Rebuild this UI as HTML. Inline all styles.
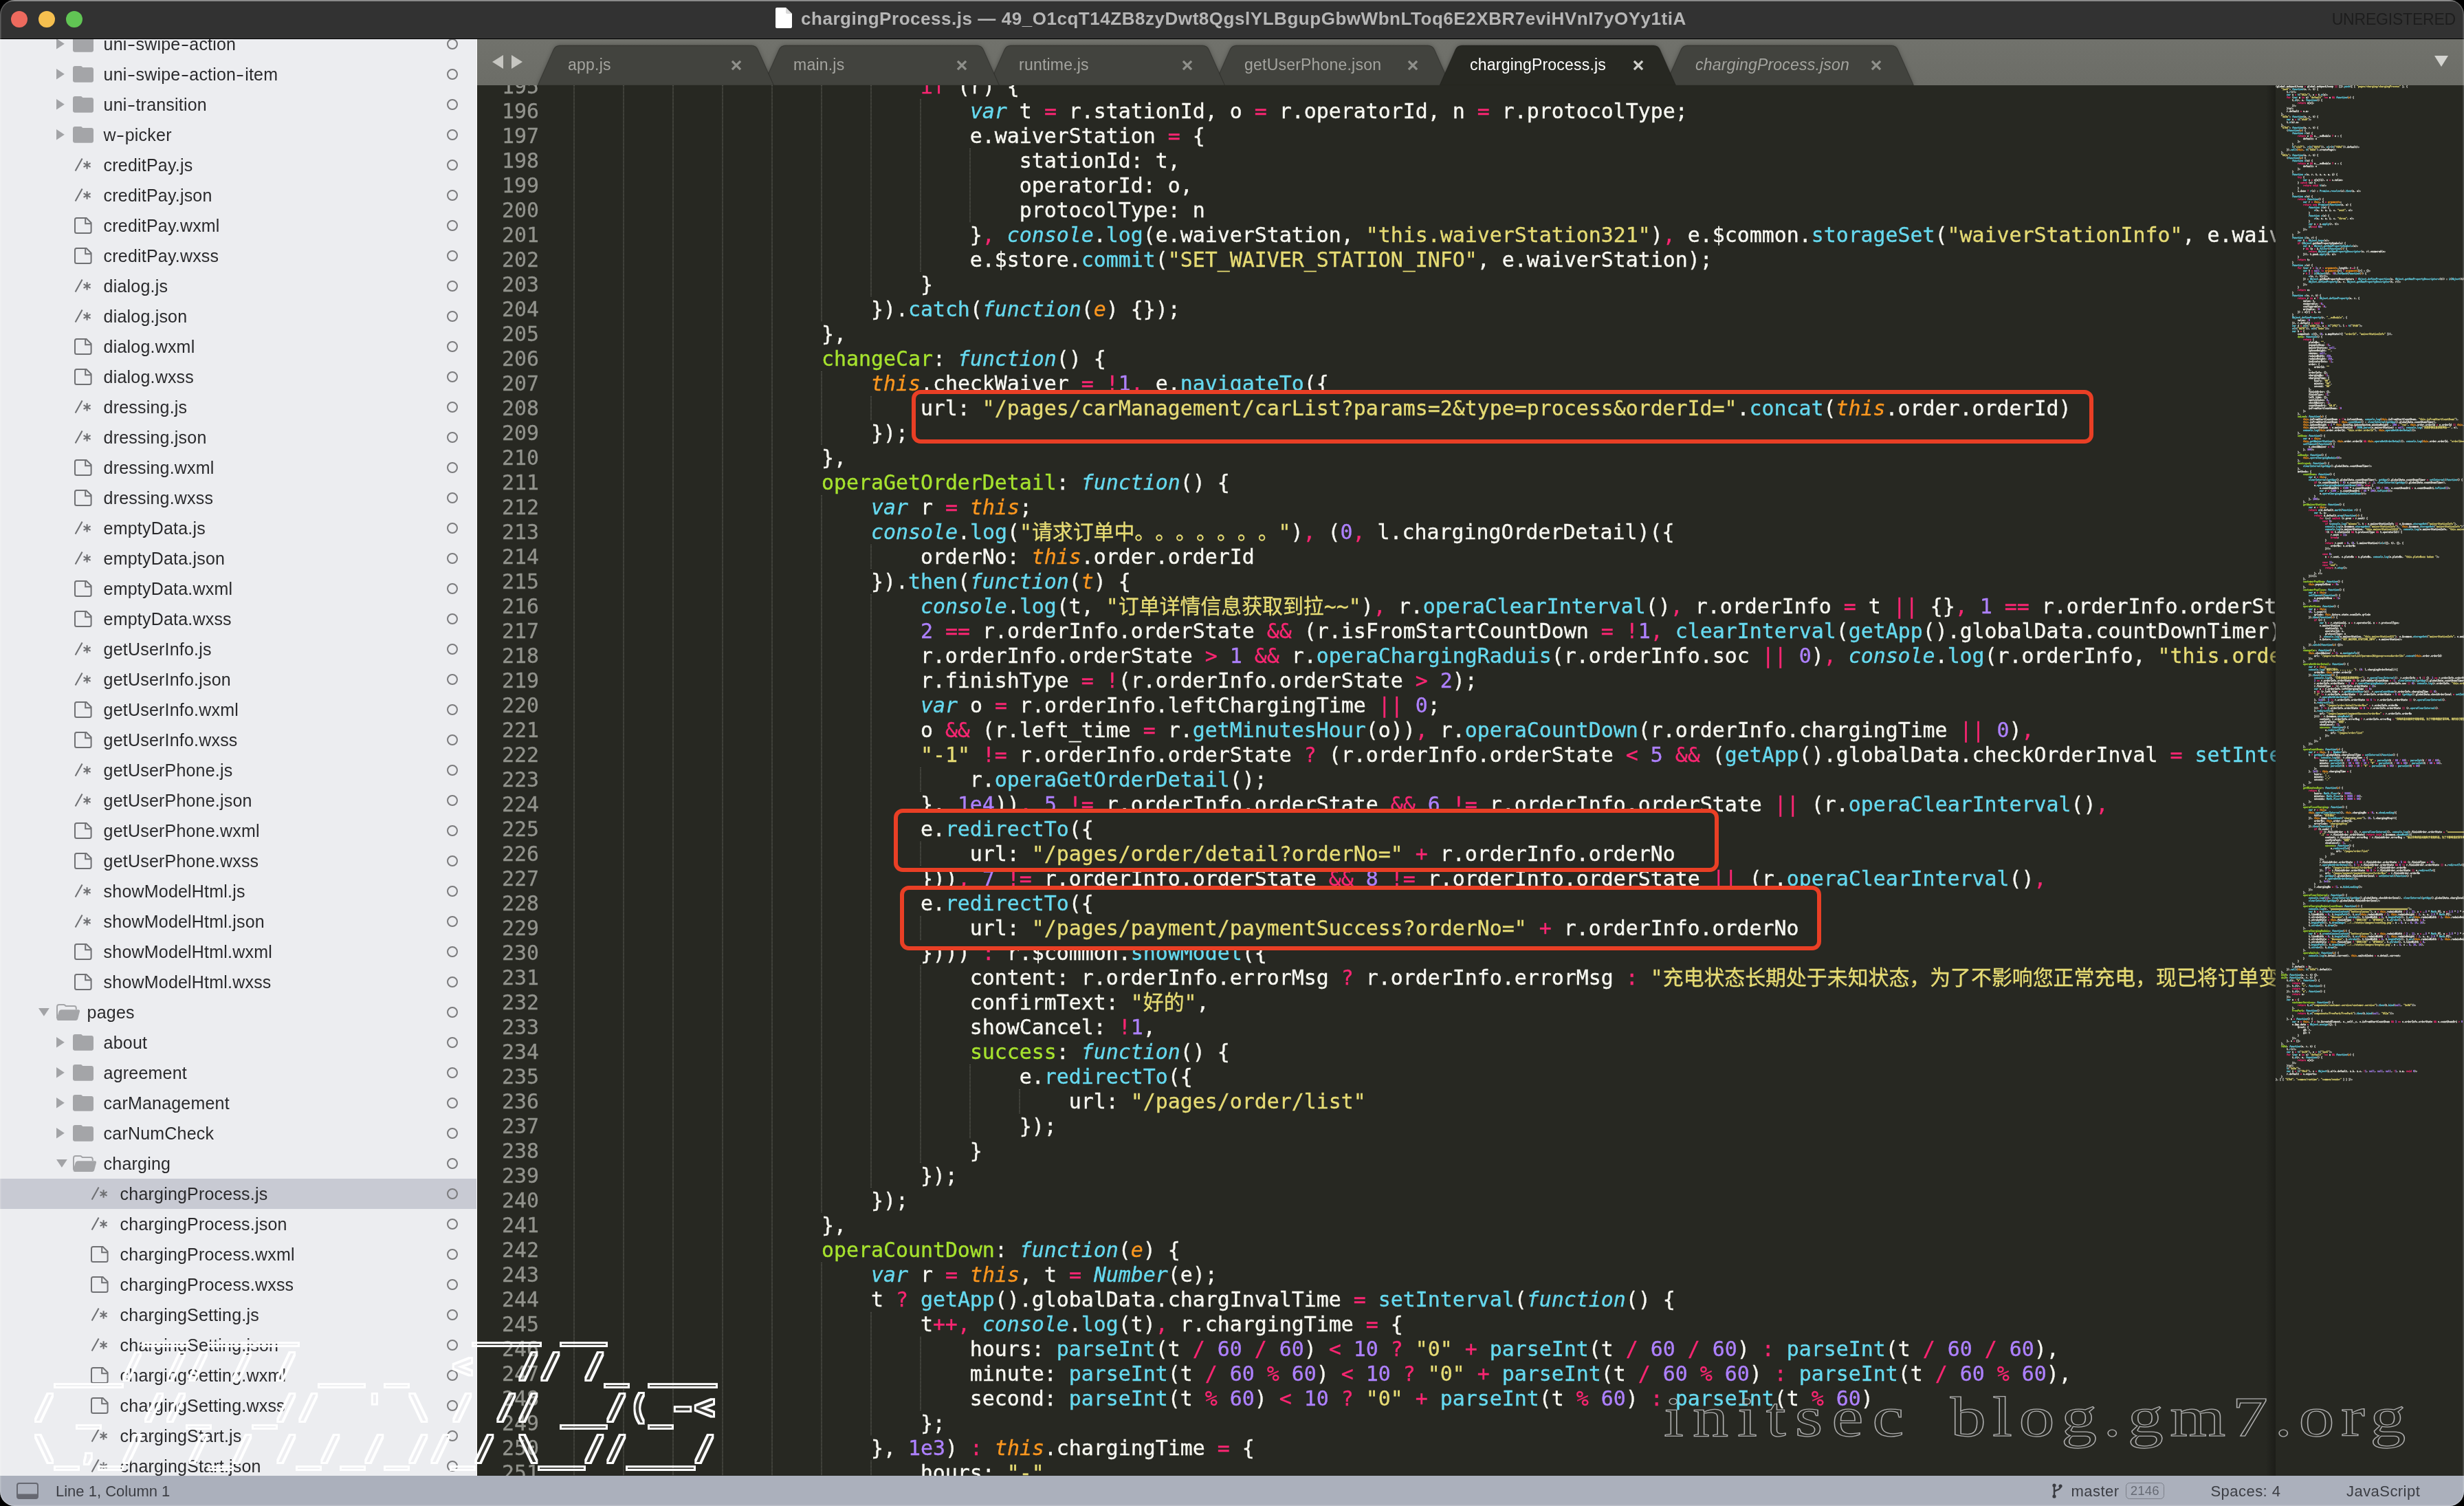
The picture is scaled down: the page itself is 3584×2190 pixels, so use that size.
<!DOCTYPE html>
<html lang="zh"><head><meta charset="utf-8"><title>chargingProcess.js</title>
<style>
*{box-sizing:border-box;margin:0;padding:0}
html,body{width:3584px;height:2190px;background:#000;overflow:hidden}
body{font-family:"Liberation Sans","Noto Sans CJK SC",sans-serif;position:relative}
.win{position:absolute;left:0;top:0;width:3584px;height:2190px;border-radius:21px;overflow:hidden;background:#272822;will-change:transform}
.ic{position:absolute;display:block}
.win:after{content:"";position:absolute;left:0;top:0;width:100%;height:100%;border-radius:21px;box-shadow:inset 0 0 0 1.6px rgba(255,255,255,.2);pointer-events:none;z-index:30}
.title{position:absolute;left:0;top:0;width:100%;height:57px;background:#323232;border-top:2px solid #747474;border-bottom:1px solid #000}
.title .dot{position:absolute;top:14px;width:24px;height:24px;border-radius:50%}
.title .t{position:absolute;left:1165px;top:6.5px;font-weight:bold;font-size:26px;line-height:36px;color:#b6b6b6;white-space:nowrap;letter-spacing:.54px}
.title .u{position:absolute;right:12px;top:7.6px;font-size:23px;line-height:36px;color:#1d1d1d;letter-spacing:-.2px}
.side{position:absolute;left:0;top:57px;width:694px;height:2089px;background:#ecedf0;overflow:hidden;border-right:1px solid #fbfbfb}
.row{position:absolute;left:0;width:693px;height:44px}
.row.sel{background:#c8cad3}
.row .nm{position:absolute;top:0;line-height:44px;font-size:25px;color:#2a2a2c;white-space:nowrap;letter-spacing:.2px}
.row .nm b{font-weight:normal;display:inline-block;transform:scaleX(1.45);margin:0 2.2px}
.row .circ{position:absolute;left:650px;top:14px;width:16px;height:16px;border:2px solid #7b7b7d;border-radius:50%}
.tabbar{position:absolute;left:694px;top:57px;width:2890px;height:67px;background:linear-gradient(#71726c,#6c6d67);overflow:hidden}
.tl{position:absolute;top:14.7px;font-size:23px;line-height:44px;white-space:nowrap;letter-spacing:.2px}
.ed{position:absolute;left:694px;top:124px;width:2616px;height:2022px;background:#272822;overflow:hidden;font-family:"DejaVu Sans Mono","Liberation Mono","Noto Sans CJK SC",monospace;font-size:29.9px;text-spacing-trim:space-all}
.ln{position:absolute;left:0;width:100%;height:36px;line-height:36px;white-space:pre;z-index:1}
.ln.z{z-index:3}
.no{position:absolute;left:36px;width:54px;text-align:right;color:#92938d;-webkit-text-stroke:.3px}
.tx{position:absolute;left:141px;color:#f8f8f2;-webkit-text-stroke:.35px}
.gd{position:absolute;top:0;width:2px;height:36px;background:repeating-linear-gradient(#53544d 0,#53544d 1px,transparent 1px,transparent 2px)}
i{font-style:oblique}
.b{color:#66d9ef}.o{color:#fd971f}.p{color:#f92672}.y{color:#e6db74}.v{color:#ae81ff}.g{color:#a6e22e}
.rb{position:absolute;border:6.4px solid #e93f25;border-radius:13px;background:#272822;z-index:2}
.mm{position:absolute;left:3310px;top:124px;width:274px;height:2022px;background:#272822;overflow:hidden}
.mm pre{position:absolute;left:0;top:0;width:2466px;overflow:hidden;transform:scale(.111111);transform-origin:0 0;font-family:"DejaVu Sans Mono","Liberation Mono","Noto Sans CJK SC",monospace;font-size:29.9px;line-height:36px;color:#f8f8f2;-webkit-text-stroke:2.5px;text-spacing-trim:space-all;opacity:.9}
.mmsh{position:absolute;left:3296px;top:124px;width:14px;height:2022px;background:linear-gradient(90deg,rgba(20,20,17,0),rgba(20,20,17,.55));z-index:5}
.status{position:absolute;left:0;top:2146px;width:100%;height:44px;background:#abb0bc;font-size:22px;color:#3b3d43;line-height:44px}
.status span{position:absolute;top:1.4px;white-space:nowrap;letter-spacing:.45px}
.art{position:absolute;left:50.6px;top:1896px;font-family:"DejaVu Sans Mono","Liberation Mono",monospace;font-size:47px;line-height:60px;letter-spacing:3.704px;color:#fff;white-space:pre;filter:url(#ol);z-index:9}
.art u{display:inline-block;text-decoration:none;letter-spacing:0;transform:scaleX(1.1309);transform-origin:0 50%;margin-left:-1.85px;margin-right:1.85px;position:relative;top:3px}
.art s{display:inline-block;text-decoration:none;letter-spacing:0;width:28.3px;margin-right:3.704px;transform:scaleX(1.7)}
.wm{position:absolute;left:2420px;top:2015.7px;font-family:"Liberation Serif",serif;font-size:82px;line-height:90px;color:transparent;-webkit-text-stroke:1.25px #adadad;white-space:pre;z-index:9;letter-spacing:7.4px;word-spacing:14.7px;transform:scaleX(1.27);transform-origin:0 0}
</style></head><body>
<div class="win">
<div class="title">
<i class="dot" style="left:16px;background:#ed6a5e"></i><i class="dot" style="left:56px;background:#f5bf4f"></i><i class="dot" style="left:96px;background:#61c554"></i>
<svg class="ic" style="left:1128px;top:9px" width="24" height="30" viewBox="0 0 24 30"><path d="M2 0H15L24 9V28C24 29.1 23.1 30 22 30H2C.9 30 0 29.1 0 28V2C0 .9 .9 0 2 0Z" fill="#fff"/><path d="M15 0V7C15 8.1 15.9 9 17 9H24Z" fill="#d8d8d8"/></svg>
<span class="t">chargingProcess.js — 49_O1cqT14ZB8zyDwt8QgslYLBgupGbwWbnLToq6E2XBR7eviHVnI7yOYy1tiA</span>
<span class="u">UNREGISTERED</span>
</div>
<div class="side">
<div class="row" style="top:-15.0px"><svg class="ic" style="left:82px;top:14.3px" width="12" height="16" viewBox="0 0 12 16"><path d="M0 0L11.8 7.8L0 15.6Z" fill="#a2a3a6"/></svg><svg class="ic" style="left:106px;top:10px" width="30" height="24" viewBox="0 0 30 24"><path d="M3 0H11.2C12.2 0 12.7 .4 13.3 1L14.3 2H27C28.7 2 30 3.3 30 5V20.8C30 22.5 28.7 23.8 27 23.8H3C1.3 23.8 0 22.5 0 20.8V3C0 1.3 1.3 0 3 0Z" fill="#a4a5a8"/></svg><span class="nm" style="left:150.6px">uni<b>-</b>swipe<b>-</b>action</span><i class="circ"></i></div>
<div class="row" style="top:29.0px"><svg class="ic" style="left:82px;top:14.3px" width="12" height="16" viewBox="0 0 12 16"><path d="M0 0L11.8 7.8L0 15.6Z" fill="#a2a3a6"/></svg><svg class="ic" style="left:106px;top:10px" width="30" height="24" viewBox="0 0 30 24"><path d="M3 0H11.2C12.2 0 12.7 .4 13.3 1L14.3 2H27C28.7 2 30 3.3 30 5V20.8C30 22.5 28.7 23.8 27 23.8H3C1.3 23.8 0 22.5 0 20.8V3C0 1.3 1.3 0 3 0Z" fill="#a4a5a8"/></svg><span class="nm" style="left:150.6px">uni<b>-</b>swipe<b>-</b>action<b>-</b>item</span><i class="circ"></i></div>
<div class="row" style="top:73.0px"><svg class="ic" style="left:82px;top:14.3px" width="12" height="16" viewBox="0 0 12 16"><path d="M0 0L11.8 7.8L0 15.6Z" fill="#a2a3a6"/></svg><svg class="ic" style="left:106px;top:10px" width="30" height="24" viewBox="0 0 30 24"><path d="M3 0H11.2C12.2 0 12.7 .4 13.3 1L14.3 2H27C28.7 2 30 3.3 30 5V20.8C30 22.5 28.7 23.8 27 23.8H3C1.3 23.8 0 22.5 0 20.8V3C0 1.3 1.3 0 3 0Z" fill="#a4a5a8"/></svg><span class="nm" style="left:150.6px">uni<b>-</b>transition</span><i class="circ"></i></div>
<div class="row" style="top:117.0px"><svg class="ic" style="left:82px;top:14.3px" width="12" height="16" viewBox="0 0 12 16"><path d="M0 0L11.8 7.8L0 15.6Z" fill="#a2a3a6"/></svg><svg class="ic" style="left:106px;top:10px" width="30" height="24" viewBox="0 0 30 24"><path d="M3 0H11.2C12.2 0 12.7 .4 13.3 1L14.3 2H27C28.7 2 30 3.3 30 5V20.8C30 22.5 28.7 23.8 27 23.8H3C1.3 23.8 0 22.5 0 20.8V3C0 1.3 1.3 0 3 0Z" fill="#a4a5a8"/></svg><span class="nm" style="left:150.6px">w<b>-</b>picker</span><i class="circ"></i></div>
<div class="row" style="top:161.0px"><svg class="ic" style="left:108px;top:10px" width="26" height="24" viewBox="0 0 26 24"><path d="M1.6 20.4L11.6 2.6" stroke="#707174" stroke-width="2.1" fill="none"/><path d="M18.6 6.2V17.8M13.6 9.1L23.6 14.9M13.6 14.9L23.6 9.1" stroke="#707174" stroke-width="2.1" fill="none"/></svg><span class="nm" style="left:150.6px">creditPay.js</span><i class="circ"></i></div>
<div class="row" style="top:205.0px"><svg class="ic" style="left:108px;top:10px" width="26" height="24" viewBox="0 0 26 24"><path d="M1.6 20.4L11.6 2.6" stroke="#707174" stroke-width="2.1" fill="none"/><path d="M18.6 6.2V17.8M13.6 9.1L23.6 14.9M13.6 14.9L23.6 9.1" stroke="#707174" stroke-width="2.1" fill="none"/></svg><span class="nm" style="left:150.6px">creditPay.json</span><i class="circ"></i></div>
<div class="row" style="top:249.0px"><svg class="ic" style="left:108px;top:10px" width="26" height="24" viewBox="0 0 26 24"><path d="M3.5 1H17.6L24.6 8V20.5C24.6 21.9 23.5 23 22.1 23H3.5C2.1 23 1 21.9 1 20.5V3.5C1 2.1 2.1 1 3.5 1Z" fill="none" stroke="#707174" stroke-width="2"/><path d="M16.2 1V9.3H24.6" fill="none" stroke="#707174" stroke-width="2"/></svg><span class="nm" style="left:150.6px">creditPay.wxml</span><i class="circ"></i></div>
<div class="row" style="top:293.0px"><svg class="ic" style="left:108px;top:10px" width="26" height="24" viewBox="0 0 26 24"><path d="M3.5 1H17.6L24.6 8V20.5C24.6 21.9 23.5 23 22.1 23H3.5C2.1 23 1 21.9 1 20.5V3.5C1 2.1 2.1 1 3.5 1Z" fill="none" stroke="#707174" stroke-width="2"/><path d="M16.2 1V9.3H24.6" fill="none" stroke="#707174" stroke-width="2"/></svg><span class="nm" style="left:150.6px">creditPay.wxss</span><i class="circ"></i></div>
<div class="row" style="top:337.0px"><svg class="ic" style="left:108px;top:10px" width="26" height="24" viewBox="0 0 26 24"><path d="M1.6 20.4L11.6 2.6" stroke="#707174" stroke-width="2.1" fill="none"/><path d="M18.6 6.2V17.8M13.6 9.1L23.6 14.9M13.6 14.9L23.6 9.1" stroke="#707174" stroke-width="2.1" fill="none"/></svg><span class="nm" style="left:150.6px">dialog.js</span><i class="circ"></i></div>
<div class="row" style="top:381.0px"><svg class="ic" style="left:108px;top:10px" width="26" height="24" viewBox="0 0 26 24"><path d="M1.6 20.4L11.6 2.6" stroke="#707174" stroke-width="2.1" fill="none"/><path d="M18.6 6.2V17.8M13.6 9.1L23.6 14.9M13.6 14.9L23.6 9.1" stroke="#707174" stroke-width="2.1" fill="none"/></svg><span class="nm" style="left:150.6px">dialog.json</span><i class="circ"></i></div>
<div class="row" style="top:425.0px"><svg class="ic" style="left:108px;top:10px" width="26" height="24" viewBox="0 0 26 24"><path d="M3.5 1H17.6L24.6 8V20.5C24.6 21.9 23.5 23 22.1 23H3.5C2.1 23 1 21.9 1 20.5V3.5C1 2.1 2.1 1 3.5 1Z" fill="none" stroke="#707174" stroke-width="2"/><path d="M16.2 1V9.3H24.6" fill="none" stroke="#707174" stroke-width="2"/></svg><span class="nm" style="left:150.6px">dialog.wxml</span><i class="circ"></i></div>
<div class="row" style="top:469.0px"><svg class="ic" style="left:108px;top:10px" width="26" height="24" viewBox="0 0 26 24"><path d="M3.5 1H17.6L24.6 8V20.5C24.6 21.9 23.5 23 22.1 23H3.5C2.1 23 1 21.9 1 20.5V3.5C1 2.1 2.1 1 3.5 1Z" fill="none" stroke="#707174" stroke-width="2"/><path d="M16.2 1V9.3H24.6" fill="none" stroke="#707174" stroke-width="2"/></svg><span class="nm" style="left:150.6px">dialog.wxss</span><i class="circ"></i></div>
<div class="row" style="top:513.0px"><svg class="ic" style="left:108px;top:10px" width="26" height="24" viewBox="0 0 26 24"><path d="M1.6 20.4L11.6 2.6" stroke="#707174" stroke-width="2.1" fill="none"/><path d="M18.6 6.2V17.8M13.6 9.1L23.6 14.9M13.6 14.9L23.6 9.1" stroke="#707174" stroke-width="2.1" fill="none"/></svg><span class="nm" style="left:150.6px">dressing.js</span><i class="circ"></i></div>
<div class="row" style="top:557.0px"><svg class="ic" style="left:108px;top:10px" width="26" height="24" viewBox="0 0 26 24"><path d="M1.6 20.4L11.6 2.6" stroke="#707174" stroke-width="2.1" fill="none"/><path d="M18.6 6.2V17.8M13.6 9.1L23.6 14.9M13.6 14.9L23.6 9.1" stroke="#707174" stroke-width="2.1" fill="none"/></svg><span class="nm" style="left:150.6px">dressing.json</span><i class="circ"></i></div>
<div class="row" style="top:601.0px"><svg class="ic" style="left:108px;top:10px" width="26" height="24" viewBox="0 0 26 24"><path d="M3.5 1H17.6L24.6 8V20.5C24.6 21.9 23.5 23 22.1 23H3.5C2.1 23 1 21.9 1 20.5V3.5C1 2.1 2.1 1 3.5 1Z" fill="none" stroke="#707174" stroke-width="2"/><path d="M16.2 1V9.3H24.6" fill="none" stroke="#707174" stroke-width="2"/></svg><span class="nm" style="left:150.6px">dressing.wxml</span><i class="circ"></i></div>
<div class="row" style="top:645.0px"><svg class="ic" style="left:108px;top:10px" width="26" height="24" viewBox="0 0 26 24"><path d="M3.5 1H17.6L24.6 8V20.5C24.6 21.9 23.5 23 22.1 23H3.5C2.1 23 1 21.9 1 20.5V3.5C1 2.1 2.1 1 3.5 1Z" fill="none" stroke="#707174" stroke-width="2"/><path d="M16.2 1V9.3H24.6" fill="none" stroke="#707174" stroke-width="2"/></svg><span class="nm" style="left:150.6px">dressing.wxss</span><i class="circ"></i></div>
<div class="row" style="top:689.0px"><svg class="ic" style="left:108px;top:10px" width="26" height="24" viewBox="0 0 26 24"><path d="M1.6 20.4L11.6 2.6" stroke="#707174" stroke-width="2.1" fill="none"/><path d="M18.6 6.2V17.8M13.6 9.1L23.6 14.9M13.6 14.9L23.6 9.1" stroke="#707174" stroke-width="2.1" fill="none"/></svg><span class="nm" style="left:150.6px">emptyData.js</span><i class="circ"></i></div>
<div class="row" style="top:733.0px"><svg class="ic" style="left:108px;top:10px" width="26" height="24" viewBox="0 0 26 24"><path d="M1.6 20.4L11.6 2.6" stroke="#707174" stroke-width="2.1" fill="none"/><path d="M18.6 6.2V17.8M13.6 9.1L23.6 14.9M13.6 14.9L23.6 9.1" stroke="#707174" stroke-width="2.1" fill="none"/></svg><span class="nm" style="left:150.6px">emptyData.json</span><i class="circ"></i></div>
<div class="row" style="top:777.0px"><svg class="ic" style="left:108px;top:10px" width="26" height="24" viewBox="0 0 26 24"><path d="M3.5 1H17.6L24.6 8V20.5C24.6 21.9 23.5 23 22.1 23H3.5C2.1 23 1 21.9 1 20.5V3.5C1 2.1 2.1 1 3.5 1Z" fill="none" stroke="#707174" stroke-width="2"/><path d="M16.2 1V9.3H24.6" fill="none" stroke="#707174" stroke-width="2"/></svg><span class="nm" style="left:150.6px">emptyData.wxml</span><i class="circ"></i></div>
<div class="row" style="top:821.0px"><svg class="ic" style="left:108px;top:10px" width="26" height="24" viewBox="0 0 26 24"><path d="M3.5 1H17.6L24.6 8V20.5C24.6 21.9 23.5 23 22.1 23H3.5C2.1 23 1 21.9 1 20.5V3.5C1 2.1 2.1 1 3.5 1Z" fill="none" stroke="#707174" stroke-width="2"/><path d="M16.2 1V9.3H24.6" fill="none" stroke="#707174" stroke-width="2"/></svg><span class="nm" style="left:150.6px">emptyData.wxss</span><i class="circ"></i></div>
<div class="row" style="top:865.0px"><svg class="ic" style="left:108px;top:10px" width="26" height="24" viewBox="0 0 26 24"><path d="M1.6 20.4L11.6 2.6" stroke="#707174" stroke-width="2.1" fill="none"/><path d="M18.6 6.2V17.8M13.6 9.1L23.6 14.9M13.6 14.9L23.6 9.1" stroke="#707174" stroke-width="2.1" fill="none"/></svg><span class="nm" style="left:150.6px">getUserInfo.js</span><i class="circ"></i></div>
<div class="row" style="top:909.0px"><svg class="ic" style="left:108px;top:10px" width="26" height="24" viewBox="0 0 26 24"><path d="M1.6 20.4L11.6 2.6" stroke="#707174" stroke-width="2.1" fill="none"/><path d="M18.6 6.2V17.8M13.6 9.1L23.6 14.9M13.6 14.9L23.6 9.1" stroke="#707174" stroke-width="2.1" fill="none"/></svg><span class="nm" style="left:150.6px">getUserInfo.json</span><i class="circ"></i></div>
<div class="row" style="top:953.0px"><svg class="ic" style="left:108px;top:10px" width="26" height="24" viewBox="0 0 26 24"><path d="M3.5 1H17.6L24.6 8V20.5C24.6 21.9 23.5 23 22.1 23H3.5C2.1 23 1 21.9 1 20.5V3.5C1 2.1 2.1 1 3.5 1Z" fill="none" stroke="#707174" stroke-width="2"/><path d="M16.2 1V9.3H24.6" fill="none" stroke="#707174" stroke-width="2"/></svg><span class="nm" style="left:150.6px">getUserInfo.wxml</span><i class="circ"></i></div>
<div class="row" style="top:997.0px"><svg class="ic" style="left:108px;top:10px" width="26" height="24" viewBox="0 0 26 24"><path d="M3.5 1H17.6L24.6 8V20.5C24.6 21.9 23.5 23 22.1 23H3.5C2.1 23 1 21.9 1 20.5V3.5C1 2.1 2.1 1 3.5 1Z" fill="none" stroke="#707174" stroke-width="2"/><path d="M16.2 1V9.3H24.6" fill="none" stroke="#707174" stroke-width="2"/></svg><span class="nm" style="left:150.6px">getUserInfo.wxss</span><i class="circ"></i></div>
<div class="row" style="top:1041.0px"><svg class="ic" style="left:108px;top:10px" width="26" height="24" viewBox="0 0 26 24"><path d="M1.6 20.4L11.6 2.6" stroke="#707174" stroke-width="2.1" fill="none"/><path d="M18.6 6.2V17.8M13.6 9.1L23.6 14.9M13.6 14.9L23.6 9.1" stroke="#707174" stroke-width="2.1" fill="none"/></svg><span class="nm" style="left:150.6px">getUserPhone.js</span><i class="circ"></i></div>
<div class="row" style="top:1085.0px"><svg class="ic" style="left:108px;top:10px" width="26" height="24" viewBox="0 0 26 24"><path d="M1.6 20.4L11.6 2.6" stroke="#707174" stroke-width="2.1" fill="none"/><path d="M18.6 6.2V17.8M13.6 9.1L23.6 14.9M13.6 14.9L23.6 9.1" stroke="#707174" stroke-width="2.1" fill="none"/></svg><span class="nm" style="left:150.6px">getUserPhone.json</span><i class="circ"></i></div>
<div class="row" style="top:1129.0px"><svg class="ic" style="left:108px;top:10px" width="26" height="24" viewBox="0 0 26 24"><path d="M3.5 1H17.6L24.6 8V20.5C24.6 21.9 23.5 23 22.1 23H3.5C2.1 23 1 21.9 1 20.5V3.5C1 2.1 2.1 1 3.5 1Z" fill="none" stroke="#707174" stroke-width="2"/><path d="M16.2 1V9.3H24.6" fill="none" stroke="#707174" stroke-width="2"/></svg><span class="nm" style="left:150.6px">getUserPhone.wxml</span><i class="circ"></i></div>
<div class="row" style="top:1173.0px"><svg class="ic" style="left:108px;top:10px" width="26" height="24" viewBox="0 0 26 24"><path d="M3.5 1H17.6L24.6 8V20.5C24.6 21.9 23.5 23 22.1 23H3.5C2.1 23 1 21.9 1 20.5V3.5C1 2.1 2.1 1 3.5 1Z" fill="none" stroke="#707174" stroke-width="2"/><path d="M16.2 1V9.3H24.6" fill="none" stroke="#707174" stroke-width="2"/></svg><span class="nm" style="left:150.6px">getUserPhone.wxss</span><i class="circ"></i></div>
<div class="row" style="top:1217.0px"><svg class="ic" style="left:108px;top:10px" width="26" height="24" viewBox="0 0 26 24"><path d="M1.6 20.4L11.6 2.6" stroke="#707174" stroke-width="2.1" fill="none"/><path d="M18.6 6.2V17.8M13.6 9.1L23.6 14.9M13.6 14.9L23.6 9.1" stroke="#707174" stroke-width="2.1" fill="none"/></svg><span class="nm" style="left:150.6px">showModelHtml.js</span><i class="circ"></i></div>
<div class="row" style="top:1261.0px"><svg class="ic" style="left:108px;top:10px" width="26" height="24" viewBox="0 0 26 24"><path d="M1.6 20.4L11.6 2.6" stroke="#707174" stroke-width="2.1" fill="none"/><path d="M18.6 6.2V17.8M13.6 9.1L23.6 14.9M13.6 14.9L23.6 9.1" stroke="#707174" stroke-width="2.1" fill="none"/></svg><span class="nm" style="left:150.6px">showModelHtml.json</span><i class="circ"></i></div>
<div class="row" style="top:1305.0px"><svg class="ic" style="left:108px;top:10px" width="26" height="24" viewBox="0 0 26 24"><path d="M3.5 1H17.6L24.6 8V20.5C24.6 21.9 23.5 23 22.1 23H3.5C2.1 23 1 21.9 1 20.5V3.5C1 2.1 2.1 1 3.5 1Z" fill="none" stroke="#707174" stroke-width="2"/><path d="M16.2 1V9.3H24.6" fill="none" stroke="#707174" stroke-width="2"/></svg><span class="nm" style="left:150.6px">showModelHtml.wxml</span><i class="circ"></i></div>
<div class="row" style="top:1349.0px"><svg class="ic" style="left:108px;top:10px" width="26" height="24" viewBox="0 0 26 24"><path d="M3.5 1H17.6L24.6 8V20.5C24.6 21.9 23.5 23 22.1 23H3.5C2.1 23 1 21.9 1 20.5V3.5C1 2.1 2.1 1 3.5 1Z" fill="none" stroke="#707174" stroke-width="2"/><path d="M16.2 1V9.3H24.6" fill="none" stroke="#707174" stroke-width="2"/></svg><span class="nm" style="left:150.6px">showModelHtml.wxss</span><i class="circ"></i></div>
<div class="row" style="top:1393.0px"><svg class="ic" style="left:56px;top:16px" width="16" height="12" viewBox="0 0 16 12"><path d="M0 0H15.8L7.9 11.8Z" fill="#a2a3a6"/></svg><svg class="ic" style="left:82px;top:9.8px" width="35" height="25" viewBox="0 0 35 25"><path d="M1 21V4C1 2.3 2.3 1 4 1H10.6C11.6 1 12.1 1.4 12.7 2L13.7 3H26C27.7 3 28.8 4.3 28.8 6V8" fill="none" stroke="#a4a5a8" stroke-width="2"/><path d="M7.5 8.2H32C33.6 8.2 34.4 9.4 34 10.8L31.2 21.6C30.8 23.1 29.6 24 28 24H3C1.2 24 .2 22.6 .7 21L3.6 11C4.1 9.3 5.6 8.2 7.5 8.2Z" fill="#a4a5a8"/></svg><span class="nm" style="left:126.6px">pages</span><i class="circ"></i></div>
<div class="row" style="top:1437.0px"><svg class="ic" style="left:82px;top:14.3px" width="12" height="16" viewBox="0 0 12 16"><path d="M0 0L11.8 7.8L0 15.6Z" fill="#a2a3a6"/></svg><svg class="ic" style="left:106px;top:10px" width="30" height="24" viewBox="0 0 30 24"><path d="M3 0H11.2C12.2 0 12.7 .4 13.3 1L14.3 2H27C28.7 2 30 3.3 30 5V20.8C30 22.5 28.7 23.8 27 23.8H3C1.3 23.8 0 22.5 0 20.8V3C0 1.3 1.3 0 3 0Z" fill="#a4a5a8"/></svg><span class="nm" style="left:150.6px">about</span><i class="circ"></i></div>
<div class="row" style="top:1481.0px"><svg class="ic" style="left:82px;top:14.3px" width="12" height="16" viewBox="0 0 12 16"><path d="M0 0L11.8 7.8L0 15.6Z" fill="#a2a3a6"/></svg><svg class="ic" style="left:106px;top:10px" width="30" height="24" viewBox="0 0 30 24"><path d="M3 0H11.2C12.2 0 12.7 .4 13.3 1L14.3 2H27C28.7 2 30 3.3 30 5V20.8C30 22.5 28.7 23.8 27 23.8H3C1.3 23.8 0 22.5 0 20.8V3C0 1.3 1.3 0 3 0Z" fill="#a4a5a8"/></svg><span class="nm" style="left:150.6px">agreement</span><i class="circ"></i></div>
<div class="row" style="top:1525.0px"><svg class="ic" style="left:82px;top:14.3px" width="12" height="16" viewBox="0 0 12 16"><path d="M0 0L11.8 7.8L0 15.6Z" fill="#a2a3a6"/></svg><svg class="ic" style="left:106px;top:10px" width="30" height="24" viewBox="0 0 30 24"><path d="M3 0H11.2C12.2 0 12.7 .4 13.3 1L14.3 2H27C28.7 2 30 3.3 30 5V20.8C30 22.5 28.7 23.8 27 23.8H3C1.3 23.8 0 22.5 0 20.8V3C0 1.3 1.3 0 3 0Z" fill="#a4a5a8"/></svg><span class="nm" style="left:150.6px">carManagement</span><i class="circ"></i></div>
<div class="row" style="top:1569.0px"><svg class="ic" style="left:82px;top:14.3px" width="12" height="16" viewBox="0 0 12 16"><path d="M0 0L11.8 7.8L0 15.6Z" fill="#a2a3a6"/></svg><svg class="ic" style="left:106px;top:10px" width="30" height="24" viewBox="0 0 30 24"><path d="M3 0H11.2C12.2 0 12.7 .4 13.3 1L14.3 2H27C28.7 2 30 3.3 30 5V20.8C30 22.5 28.7 23.8 27 23.8H3C1.3 23.8 0 22.5 0 20.8V3C0 1.3 1.3 0 3 0Z" fill="#a4a5a8"/></svg><span class="nm" style="left:150.6px">carNumCheck</span><i class="circ"></i></div>
<div class="row" style="top:1613.0px"><svg class="ic" style="left:82px;top:16px" width="16" height="12" viewBox="0 0 16 12"><path d="M0 0H15.8L7.9 11.8Z" fill="#a2a3a6"/></svg><svg class="ic" style="left:106px;top:9.8px" width="35" height="25" viewBox="0 0 35 25"><path d="M1 21V4C1 2.3 2.3 1 4 1H10.6C11.6 1 12.1 1.4 12.7 2L13.7 3H26C27.7 3 28.8 4.3 28.8 6V8" fill="none" stroke="#a4a5a8" stroke-width="2"/><path d="M7.5 8.2H32C33.6 8.2 34.4 9.4 34 10.8L31.2 21.6C30.8 23.1 29.6 24 28 24H3C1.2 24 .2 22.6 .7 21L3.6 11C4.1 9.3 5.6 8.2 7.5 8.2Z" fill="#a4a5a8"/></svg><span class="nm" style="left:150.6px">charging</span><i class="circ"></i></div>
<div class="row sel" style="top:1657.0px"><svg class="ic" style="left:132.2px;top:10px" width="26" height="24" viewBox="0 0 26 24"><path d="M1.6 20.4L11.6 2.6" stroke="#707174" stroke-width="2.1" fill="none"/><path d="M18.6 6.2V17.8M13.6 9.1L23.6 14.9M13.6 14.9L23.6 9.1" stroke="#707174" stroke-width="2.1" fill="none"/></svg><span class="nm" style="left:174.6px">chargingProcess.js</span><i class="circ"></i></div>
<div class="row" style="top:1701.0px"><svg class="ic" style="left:132.2px;top:10px" width="26" height="24" viewBox="0 0 26 24"><path d="M1.6 20.4L11.6 2.6" stroke="#707174" stroke-width="2.1" fill="none"/><path d="M18.6 6.2V17.8M13.6 9.1L23.6 14.9M13.6 14.9L23.6 9.1" stroke="#707174" stroke-width="2.1" fill="none"/></svg><span class="nm" style="left:174.6px">chargingProcess.json</span><i class="circ"></i></div>
<div class="row" style="top:1745.0px"><svg class="ic" style="left:132.2px;top:10px" width="26" height="24" viewBox="0 0 26 24"><path d="M3.5 1H17.6L24.6 8V20.5C24.6 21.9 23.5 23 22.1 23H3.5C2.1 23 1 21.9 1 20.5V3.5C1 2.1 2.1 1 3.5 1Z" fill="none" stroke="#707174" stroke-width="2"/><path d="M16.2 1V9.3H24.6" fill="none" stroke="#707174" stroke-width="2"/></svg><span class="nm" style="left:174.6px">chargingProcess.wxml</span><i class="circ"></i></div>
<div class="row" style="top:1789.0px"><svg class="ic" style="left:132.2px;top:10px" width="26" height="24" viewBox="0 0 26 24"><path d="M3.5 1H17.6L24.6 8V20.5C24.6 21.9 23.5 23 22.1 23H3.5C2.1 23 1 21.9 1 20.5V3.5C1 2.1 2.1 1 3.5 1Z" fill="none" stroke="#707174" stroke-width="2"/><path d="M16.2 1V9.3H24.6" fill="none" stroke="#707174" stroke-width="2"/></svg><span class="nm" style="left:174.6px">chargingProcess.wxss</span><i class="circ"></i></div>
<div class="row" style="top:1833.0px"><svg class="ic" style="left:132.2px;top:10px" width="26" height="24" viewBox="0 0 26 24"><path d="M1.6 20.4L11.6 2.6" stroke="#707174" stroke-width="2.1" fill="none"/><path d="M18.6 6.2V17.8M13.6 9.1L23.6 14.9M13.6 14.9L23.6 9.1" stroke="#707174" stroke-width="2.1" fill="none"/></svg><span class="nm" style="left:174.6px">chargingSetting.js</span><i class="circ"></i></div>
<div class="row" style="top:1877.0px"><svg class="ic" style="left:132.2px;top:10px" width="26" height="24" viewBox="0 0 26 24"><path d="M1.6 20.4L11.6 2.6" stroke="#707174" stroke-width="2.1" fill="none"/><path d="M18.6 6.2V17.8M13.6 9.1L23.6 14.9M13.6 14.9L23.6 9.1" stroke="#707174" stroke-width="2.1" fill="none"/></svg><span class="nm" style="left:174.6px">chargingSetting.json</span><i class="circ"></i></div>
<div class="row" style="top:1921.0px"><svg class="ic" style="left:132.2px;top:10px" width="26" height="24" viewBox="0 0 26 24"><path d="M3.5 1H17.6L24.6 8V20.5C24.6 21.9 23.5 23 22.1 23H3.5C2.1 23 1 21.9 1 20.5V3.5C1 2.1 2.1 1 3.5 1Z" fill="none" stroke="#707174" stroke-width="2"/><path d="M16.2 1V9.3H24.6" fill="none" stroke="#707174" stroke-width="2"/></svg><span class="nm" style="left:174.6px">chargingSetting.wxml</span><i class="circ"></i></div>
<div class="row" style="top:1965.0px"><svg class="ic" style="left:132.2px;top:10px" width="26" height="24" viewBox="0 0 26 24"><path d="M3.5 1H17.6L24.6 8V20.5C24.6 21.9 23.5 23 22.1 23H3.5C2.1 23 1 21.9 1 20.5V3.5C1 2.1 2.1 1 3.5 1Z" fill="none" stroke="#707174" stroke-width="2"/><path d="M16.2 1V9.3H24.6" fill="none" stroke="#707174" stroke-width="2"/></svg><span class="nm" style="left:174.6px">chargingSetting.wxss</span><i class="circ"></i></div>
<div class="row" style="top:2009.0px"><svg class="ic" style="left:132.2px;top:10px" width="26" height="24" viewBox="0 0 26 24"><path d="M1.6 20.4L11.6 2.6" stroke="#707174" stroke-width="2.1" fill="none"/><path d="M18.6 6.2V17.8M13.6 9.1L23.6 14.9M13.6 14.9L23.6 9.1" stroke="#707174" stroke-width="2.1" fill="none"/></svg><span class="nm" style="left:174.6px">chargingStart.js</span><i class="circ"></i></div>
<div class="row" style="top:2053.0px"><svg class="ic" style="left:132.2px;top:10px" width="26" height="24" viewBox="0 0 26 24"><path d="M1.6 20.4L11.6 2.6" stroke="#707174" stroke-width="2.1" fill="none"/><path d="M18.6 6.2V17.8M13.6 9.1L23.6 14.9M13.6 14.9L23.6 9.1" stroke="#707174" stroke-width="2.1" fill="none"/></svg><span class="nm" style="left:174.6px">chargingStart.json</span><i class="circ"></i></div>
</div>
<div class="tabbar">
<svg class="ic" style="left:22px;top:22.7px" width="16" height="20" viewBox="0 0 16 20"><path d="M16 0V20L0 10Z" fill="#c6c6c1"/></svg>
<svg class="ic" style="left:49.5px;top:22.7px" width="16" height="20" viewBox="0 0 16 20"><path d="M0 0V20L16 10Z" fill="#c6c6c1"/></svg>
<svg class="ic" style="left:0;top:0" width="2890" height="67" viewBox="0 0 2890 67"><g style="filter:drop-shadow(0 0 3px rgba(0,0,0,.28))"><path d="M1728.1 67L1750.9 15.5Q1753.7 9.1 1760.7 9.1H2056.8Q2063.8 9.1 2066.6 15.5L2089.4 67Z" fill="#42433e" stroke="rgba(20,20,16,.3)" stroke-width="1.2"/><path d="M1072.1 67L1094.9 15.5Q1097.7 9.1 1104.7 9.1H1382.8Q1389.8 9.1 1392.6 15.5L1415.4 67Z" fill="#42433e" stroke="rgba(20,20,16,.3)" stroke-width="1.2"/><path d="M744.1 67L766.9 15.5Q769.7 9.1 776.7 9.1H1054.8Q1061.8 9.1 1064.6 15.5L1087.4 67Z" fill="#42433e" stroke="rgba(20,20,16,.3)" stroke-width="1.2"/><path d="M416.1 67L438.9 15.5Q441.7 9.1 448.7 9.1H726.8Q733.8 9.1 736.6 15.5L759.4 67Z" fill="#42433e" stroke="rgba(20,20,16,.3)" stroke-width="1.2"/><path d="M88.1 67L110.9 15.5Q113.7 9.1 120.7 9.1H398.8Q405.8 9.1 408.6 15.5L431.4 67Z" fill="#42433e" stroke="rgba(20,20,16,.3)" stroke-width="1.2"/><path d="M1400.1 67L1422.9 15.5Q1425.7 9.1 1432.7 9.1H1710.8Q1717.8 9.1 1720.6 15.5L1743.4 67Z" fill="#272822" stroke="rgba(20,20,16,.3)" stroke-width="1.2"/></g></svg><span class="tl" style="left:1772.1px;color:#a4a49f;font-style:italic;">chargingProcess.json</span><svg class="ic" style="left:2025.9px;top:29.0px" width="18" height="18" viewBox="0 0 18 18"><path d="M2.9 2.9L15.1 15.1M15.1 2.9L2.9 15.1" stroke="#8f908b" stroke-width="3.3" fill="none"/></svg><span class="tl" style="left:1116.1px;color:#a4a49f;">getUserPhone.json</span><svg class="ic" style="left:1351.9px;top:29.0px" width="18" height="18" viewBox="0 0 18 18"><path d="M2.9 2.9L15.1 15.1M15.1 2.9L2.9 15.1" stroke="#8f908b" stroke-width="3.3" fill="none"/></svg><span class="tl" style="left:788.1px;color:#a4a49f;">runtime.js</span><svg class="ic" style="left:1023.9px;top:29.0px" width="18" height="18" viewBox="0 0 18 18"><path d="M2.9 2.9L15.1 15.1M15.1 2.9L2.9 15.1" stroke="#8f908b" stroke-width="3.3" fill="none"/></svg><span class="tl" style="left:460.1px;color:#a4a49f;">main.js</span><svg class="ic" style="left:695.9px;top:29.0px" width="18" height="18" viewBox="0 0 18 18"><path d="M2.9 2.9L15.1 15.1M15.1 2.9L2.9 15.1" stroke="#8f908b" stroke-width="3.3" fill="none"/></svg><span class="tl" style="left:132.1px;color:#a4a49f;">app.js</span><svg class="ic" style="left:367.9px;top:29.0px" width="18" height="18" viewBox="0 0 18 18"><path d="M2.9 2.9L15.1 15.1M15.1 2.9L2.9 15.1" stroke="#8f908b" stroke-width="3.3" fill="none"/></svg><span class="tl" style="left:1444.1px;color:#ffffff;">chargingProcess.js</span><svg class="ic" style="left:1679.9px;top:29.0px" width="18" height="18" viewBox="0 0 18 18"><path d="M2.9 2.9L15.1 15.1M15.1 2.9L2.9 15.1" stroke="#d0d0cb" stroke-width="3.3" fill="none"/></svg>
<svg class="ic" style="left:2846.7px;top:24.1px" width="20" height="16" viewBox="0 0 20 16"><path d="M0 0H20L10 16Z" fill="#d4d4d0"/></svg>
</div>
<div class="ed">
<div class="ln" style="top:-16.3px"><span class="no">195</span><b class="gd" style="left:140px"></b><b class="gd" style="left:212px"></b><b class="gd" style="left:284px"></b><b class="gd" style="left:356px"></b><b class="gd" style="left:428px"></b><b class="gd" style="left:500px"></b><b class="gd" style="left:572px"></b><span class="tx">                            <span class="p">if</span> (r) {</span></div>
<div class="ln" style="top:19.7px"><span class="no">196</span><b class="gd" style="left:140px"></b><b class="gd" style="left:212px"></b><b class="gd" style="left:284px"></b><b class="gd" style="left:356px"></b><b class="gd" style="left:428px"></b><b class="gd" style="left:500px"></b><b class="gd" style="left:572px"></b><b class="gd" style="left:644px"></b><span class="tx">                                <i class="b">var</i> t <span class="p">=</span> r.stationId, o <span class="p">=</span> r.operatorId, n <span class="p">=</span> r.protocolType;</span></div>
<div class="ln" style="top:55.7px"><span class="no">197</span><b class="gd" style="left:140px"></b><b class="gd" style="left:212px"></b><b class="gd" style="left:284px"></b><b class="gd" style="left:356px"></b><b class="gd" style="left:428px"></b><b class="gd" style="left:500px"></b><b class="gd" style="left:572px"></b><b class="gd" style="left:644px"></b><span class="tx">                                e.waiverStation <span class="p">=</span> {</span></div>
<div class="ln" style="top:91.7px"><span class="no">198</span><b class="gd" style="left:140px"></b><b class="gd" style="left:212px"></b><b class="gd" style="left:284px"></b><b class="gd" style="left:356px"></b><b class="gd" style="left:428px"></b><b class="gd" style="left:500px"></b><b class="gd" style="left:572px"></b><b class="gd" style="left:644px"></b><b class="gd" style="left:716px"></b><span class="tx">                                    stationId: t,</span></div>
<div class="ln" style="top:127.7px"><span class="no">199</span><b class="gd" style="left:140px"></b><b class="gd" style="left:212px"></b><b class="gd" style="left:284px"></b><b class="gd" style="left:356px"></b><b class="gd" style="left:428px"></b><b class="gd" style="left:500px"></b><b class="gd" style="left:572px"></b><b class="gd" style="left:644px"></b><b class="gd" style="left:716px"></b><span class="tx">                                    operatorId: o,</span></div>
<div class="ln" style="top:163.7px"><span class="no">200</span><b class="gd" style="left:140px"></b><b class="gd" style="left:212px"></b><b class="gd" style="left:284px"></b><b class="gd" style="left:356px"></b><b class="gd" style="left:428px"></b><b class="gd" style="left:500px"></b><b class="gd" style="left:572px"></b><b class="gd" style="left:644px"></b><b class="gd" style="left:716px"></b><span class="tx">                                    protocolType: n</span></div>
<div class="ln" style="top:199.7px"><span class="no">201</span><b class="gd" style="left:140px"></b><b class="gd" style="left:212px"></b><b class="gd" style="left:284px"></b><b class="gd" style="left:356px"></b><b class="gd" style="left:428px"></b><b class="gd" style="left:500px"></b><b class="gd" style="left:572px"></b><b class="gd" style="left:644px"></b><span class="tx">                                }<span class="p">,</span> <i class="b">console</i>.<span class="b">log</span>(e.waiverStation, <span class="y">&quot;this.waiverStation321&quot;</span>)<span class="p">,</span> e.$common.<span class="b">storageSet</span>(<span class="y">&quot;waiverStationInfo&quot;</span>, e.waiverStation)<span class="p">,</span></span></div>
<div class="ln" style="top:235.7px"><span class="no">202</span><b class="gd" style="left:140px"></b><b class="gd" style="left:212px"></b><b class="gd" style="left:284px"></b><b class="gd" style="left:356px"></b><b class="gd" style="left:428px"></b><b class="gd" style="left:500px"></b><b class="gd" style="left:572px"></b><b class="gd" style="left:644px"></b><span class="tx">                                e.$store.<span class="b">commit</span>(<span class="y">&quot;SET_WAIVER_STATION_INFO&quot;</span>, e.waiverStation);</span></div>
<div class="ln" style="top:271.7px"><span class="no">203</span><b class="gd" style="left:140px"></b><b class="gd" style="left:212px"></b><b class="gd" style="left:284px"></b><b class="gd" style="left:356px"></b><b class="gd" style="left:428px"></b><b class="gd" style="left:500px"></b><b class="gd" style="left:572px"></b><span class="tx">                            }</span></div>
<div class="ln" style="top:307.7px"><span class="no">204</span><b class="gd" style="left:140px"></b><b class="gd" style="left:212px"></b><b class="gd" style="left:284px"></b><b class="gd" style="left:356px"></b><b class="gd" style="left:428px"></b><b class="gd" style="left:500px"></b><span class="tx">                        }).<span class="b">catch</span>(<i class="b">function</i>(<i class="o">e</i>) {});</span></div>
<div class="ln" style="top:343.7px"><span class="no">205</span><b class="gd" style="left:140px"></b><b class="gd" style="left:212px"></b><b class="gd" style="left:284px"></b><b class="gd" style="left:356px"></b><b class="gd" style="left:428px"></b><span class="tx">                    },</span></div>
<div class="ln" style="top:379.7px"><span class="no">206</span><b class="gd" style="left:140px"></b><b class="gd" style="left:212px"></b><b class="gd" style="left:284px"></b><b class="gd" style="left:356px"></b><b class="gd" style="left:428px"></b><span class="tx">                    <span class="g">changeCar</span>: <i class="b">function</i>() {</span></div>
<div class="ln" style="top:415.7px"><span class="no">207</span><b class="gd" style="left:140px"></b><b class="gd" style="left:212px"></b><b class="gd" style="left:284px"></b><b class="gd" style="left:356px"></b><b class="gd" style="left:428px"></b><b class="gd" style="left:500px"></b><span class="tx">                        <i class="o">this</i>.checkWaiver <span class="p">=</span> <span class="p">!</span><span class="v">1</span><span class="p">,</span> e.<span class="b">navigateTo</span>({</span></div>
<div class="ln z" style="top:451.7px"><span class="no">208</span><b class="gd" style="left:140px"></b><b class="gd" style="left:212px"></b><b class="gd" style="left:284px"></b><b class="gd" style="left:356px"></b><b class="gd" style="left:428px"></b><b class="gd" style="left:500px"></b><b class="gd" style="left:572px"></b><span class="tx">                            url: <span class="y">&quot;/pages/carManagement/carList?params=2&amp;type=process&amp;orderId=&quot;</span>.<span class="b">concat</span>(<i class="o">this</i>.order.orderId)</span></div>
<div class="ln" style="top:487.7px"><span class="no">209</span><b class="gd" style="left:140px"></b><b class="gd" style="left:212px"></b><b class="gd" style="left:284px"></b><b class="gd" style="left:356px"></b><b class="gd" style="left:428px"></b><b class="gd" style="left:500px"></b><span class="tx">                        });</span></div>
<div class="ln" style="top:523.7px"><span class="no">210</span><b class="gd" style="left:140px"></b><b class="gd" style="left:212px"></b><b class="gd" style="left:284px"></b><b class="gd" style="left:356px"></b><b class="gd" style="left:428px"></b><span class="tx">                    },</span></div>
<div class="ln" style="top:559.7px"><span class="no">211</span><b class="gd" style="left:140px"></b><b class="gd" style="left:212px"></b><b class="gd" style="left:284px"></b><b class="gd" style="left:356px"></b><b class="gd" style="left:428px"></b><span class="tx">                    <span class="g">operaGetOrderDetail</span>: <i class="b">function</i>() {</span></div>
<div class="ln" style="top:595.7px"><span class="no">212</span><b class="gd" style="left:140px"></b><b class="gd" style="left:212px"></b><b class="gd" style="left:284px"></b><b class="gd" style="left:356px"></b><b class="gd" style="left:428px"></b><b class="gd" style="left:500px"></b><span class="tx">                        <i class="b">var</i> r <span class="p">=</span> <i class="o">this</i>;</span></div>
<div class="ln" style="top:631.7px"><span class="no">213</span><b class="gd" style="left:140px"></b><b class="gd" style="left:212px"></b><b class="gd" style="left:284px"></b><b class="gd" style="left:356px"></b><b class="gd" style="left:428px"></b><b class="gd" style="left:500px"></b><span class="tx">                        <i class="b">console</i>.<span class="b">log</span>(<span class="y">&quot;请求订单中。。。。。。。&quot;</span>)<span class="p">,</span> (<span class="v">0</span><span class="p">,</span> l.chargingOrderDetail)({</span></div>
<div class="ln" style="top:667.7px"><span class="no">214</span><b class="gd" style="left:140px"></b><b class="gd" style="left:212px"></b><b class="gd" style="left:284px"></b><b class="gd" style="left:356px"></b><b class="gd" style="left:428px"></b><b class="gd" style="left:500px"></b><b class="gd" style="left:572px"></b><span class="tx">                            orderNo: <i class="o">this</i>.order.orderId</span></div>
<div class="ln" style="top:703.7px"><span class="no">215</span><b class="gd" style="left:140px"></b><b class="gd" style="left:212px"></b><b class="gd" style="left:284px"></b><b class="gd" style="left:356px"></b><b class="gd" style="left:428px"></b><b class="gd" style="left:500px"></b><span class="tx">                        }).<span class="b">then</span>(<i class="b">function</i>(<i class="o">t</i>) {</span></div>
<div class="ln" style="top:739.7px"><span class="no">216</span><b class="gd" style="left:140px"></b><b class="gd" style="left:212px"></b><b class="gd" style="left:284px"></b><b class="gd" style="left:356px"></b><b class="gd" style="left:428px"></b><b class="gd" style="left:500px"></b><b class="gd" style="left:572px"></b><span class="tx">                            <i class="b">console</i>.<span class="b">log</span>(t, <span class="y">&quot;订单详情信息获取到拉~~&quot;</span>)<span class="p">,</span> r.<span class="b">operaClearInterval</span>()<span class="p">,</span> r.orderInfo <span class="p">=</span> t <span class="p">||</span> {}<span class="p">,</span> <span class="v">1</span> <span class="p">==</span> r.orderInfo.orderState <span class="p">&amp;&amp;</span> (r.isCharging <span class="p">=</span> <span class="p">!</span><span class="v">0</span>)<span class="p">,</span></span></div>
<div class="ln" style="top:775.7px"><span class="no">217</span><b class="gd" style="left:140px"></b><b class="gd" style="left:212px"></b><b class="gd" style="left:284px"></b><b class="gd" style="left:356px"></b><b class="gd" style="left:428px"></b><b class="gd" style="left:500px"></b><b class="gd" style="left:572px"></b><span class="tx">                            <span class="v">2</span> <span class="p">==</span> r.orderInfo.orderState <span class="p">&amp;&amp;</span> (r.isFromStartCountDown <span class="p">=</span> <span class="p">!</span><span class="v">1</span><span class="p">,</span> <span class="b">clearInterval</span>(<span class="b">getApp</span>().globalData.countDownTimer))<span class="p">,</span></span></div>
<div class="ln" style="top:811.7px"><span class="no">218</span><b class="gd" style="left:140px"></b><b class="gd" style="left:212px"></b><b class="gd" style="left:284px"></b><b class="gd" style="left:356px"></b><b class="gd" style="left:428px"></b><b class="gd" style="left:500px"></b><b class="gd" style="left:572px"></b><span class="tx">                            r.orderInfo.orderState <span class="p">&gt;</span> <span class="v">1</span> <span class="p">&amp;&amp;</span> r.<span class="b">operaChargingRaduis</span>(r.orderInfo.soc <span class="p">||</span> <span class="v">0</span>)<span class="p">,</span> <i class="b">console</i>.<span class="b">log</span>(r.orderInfo, <span class="y">&quot;this.orderInfo&quot;</span>)<span class="p">,</span></span></div>
<div class="ln" style="top:847.7px"><span class="no">219</span><b class="gd" style="left:140px"></b><b class="gd" style="left:212px"></b><b class="gd" style="left:284px"></b><b class="gd" style="left:356px"></b><b class="gd" style="left:428px"></b><b class="gd" style="left:500px"></b><b class="gd" style="left:572px"></b><span class="tx">                            r.finishType <span class="p">=</span> <span class="p">!</span>(r.orderInfo.orderState <span class="p">&gt;</span> <span class="v">2</span>);</span></div>
<div class="ln" style="top:883.7px"><span class="no">220</span><b class="gd" style="left:140px"></b><b class="gd" style="left:212px"></b><b class="gd" style="left:284px"></b><b class="gd" style="left:356px"></b><b class="gd" style="left:428px"></b><b class="gd" style="left:500px"></b><b class="gd" style="left:572px"></b><span class="tx">                            <i class="b">var</i> o <span class="p">=</span> r.orderInfo.leftChargingTime <span class="p">||</span> <span class="v">0</span>;</span></div>
<div class="ln" style="top:919.7px"><span class="no">221</span><b class="gd" style="left:140px"></b><b class="gd" style="left:212px"></b><b class="gd" style="left:284px"></b><b class="gd" style="left:356px"></b><b class="gd" style="left:428px"></b><b class="gd" style="left:500px"></b><b class="gd" style="left:572px"></b><span class="tx">                            o <span class="p">&amp;&amp;</span> (r.left_time <span class="p">=</span> r.<span class="b">getMinutesHour</span>(o))<span class="p">,</span> r.<span class="b">operaCountDown</span>(r.orderInfo.chargingTime <span class="p">||</span> <span class="v">0</span>)<span class="p">,</span></span></div>
<div class="ln" style="top:955.7px"><span class="no">222</span><b class="gd" style="left:140px"></b><b class="gd" style="left:212px"></b><b class="gd" style="left:284px"></b><b class="gd" style="left:356px"></b><b class="gd" style="left:428px"></b><b class="gd" style="left:500px"></b><b class="gd" style="left:572px"></b><span class="tx">                            <span class="y">&quot;-1&quot;</span> <span class="p">!=</span> r.orderInfo.orderState <span class="p">?</span> (r.orderInfo.orderState <span class="p">&lt;</span> <span class="v">5</span> <span class="p">&amp;&amp;</span> (<span class="b">getApp</span>().globalData.checkOrderInval <span class="p">=</span> <span class="b">setInterval</span>(<i class="b">function</i>() {</span></div>
<div class="ln" style="top:991.7px"><span class="no">223</span><b class="gd" style="left:140px"></b><b class="gd" style="left:212px"></b><b class="gd" style="left:284px"></b><b class="gd" style="left:356px"></b><b class="gd" style="left:428px"></b><b class="gd" style="left:500px"></b><b class="gd" style="left:572px"></b><b class="gd" style="left:644px"></b><span class="tx">                                r.<span class="b">operaGetOrderDetail</span>();</span></div>
<div class="ln" style="top:1027.7px"><span class="no">224</span><b class="gd" style="left:140px"></b><b class="gd" style="left:212px"></b><b class="gd" style="left:284px"></b><b class="gd" style="left:356px"></b><b class="gd" style="left:428px"></b><b class="gd" style="left:500px"></b><b class="gd" style="left:572px"></b><span class="tx">                            }, <span class="v">1e4</span>))<span class="p">,</span> <span class="v">5</span> <span class="p">!=</span> r.orderInfo.orderState <span class="p">&amp;&amp;</span> <span class="v">6</span> <span class="p">!=</span> r.orderInfo.orderState <span class="p">||</span> (r.<span class="b">operaClearInterval</span>()<span class="p">,</span></span></div>
<div class="ln z" style="top:1063.7px"><span class="no">225</span><b class="gd" style="left:140px"></b><b class="gd" style="left:212px"></b><b class="gd" style="left:284px"></b><b class="gd" style="left:356px"></b><b class="gd" style="left:428px"></b><b class="gd" style="left:500px"></b><b class="gd" style="left:572px"></b><span class="tx">                            e.<span class="b">redirectTo</span>({</span></div>
<div class="ln z" style="top:1099.7px"><span class="no">226</span><b class="gd" style="left:140px"></b><b class="gd" style="left:212px"></b><b class="gd" style="left:284px"></b><b class="gd" style="left:356px"></b><b class="gd" style="left:428px"></b><b class="gd" style="left:500px"></b><b class="gd" style="left:572px"></b><b class="gd" style="left:644px"></b><span class="tx">                                url: <span class="y">&quot;/pages/order/detail?orderNo=&quot;</span> <span class="p">+</span> r.orderInfo.orderNo</span></div>
<div class="ln" style="top:1135.7px"><span class="no">227</span><b class="gd" style="left:140px"></b><b class="gd" style="left:212px"></b><b class="gd" style="left:284px"></b><b class="gd" style="left:356px"></b><b class="gd" style="left:428px"></b><b class="gd" style="left:500px"></b><b class="gd" style="left:572px"></b><span class="tx">                            }))<span class="p">,</span> <span class="v">7</span> <span class="p">!=</span> r.orderInfo.orderState <span class="p">&amp;&amp;</span> <span class="v">8</span> <span class="p">!=</span> r.orderInfo.orderState <span class="p">||</span> (r.<span class="b">operaClearInterval</span>()<span class="p">,</span></span></div>
<div class="ln z" style="top:1171.7px"><span class="no">228</span><b class="gd" style="left:140px"></b><b class="gd" style="left:212px"></b><b class="gd" style="left:284px"></b><b class="gd" style="left:356px"></b><b class="gd" style="left:428px"></b><b class="gd" style="left:500px"></b><b class="gd" style="left:572px"></b><span class="tx">                            e.<span class="b">redirectTo</span>({</span></div>
<div class="ln z" style="top:1207.7px"><span class="no">229</span><b class="gd" style="left:140px"></b><b class="gd" style="left:212px"></b><b class="gd" style="left:284px"></b><b class="gd" style="left:356px"></b><b class="gd" style="left:428px"></b><b class="gd" style="left:500px"></b><b class="gd" style="left:572px"></b><b class="gd" style="left:644px"></b><span class="tx">                                url: <span class="y">&quot;/pages/payment/paymentSuccess?orderNo=&quot;</span> <span class="p">+</span> r.orderInfo.orderNo</span></div>
<div class="ln" style="top:1243.7px"><span class="no">230</span><b class="gd" style="left:140px"></b><b class="gd" style="left:212px"></b><b class="gd" style="left:284px"></b><b class="gd" style="left:356px"></b><b class="gd" style="left:428px"></b><b class="gd" style="left:500px"></b><b class="gd" style="left:572px"></b><span class="tx">                            }))) <span class="p">:</span> r.$common.<span class="b">showModel</span>({</span></div>
<div class="ln" style="top:1279.7px"><span class="no">231</span><b class="gd" style="left:140px"></b><b class="gd" style="left:212px"></b><b class="gd" style="left:284px"></b><b class="gd" style="left:356px"></b><b class="gd" style="left:428px"></b><b class="gd" style="left:500px"></b><b class="gd" style="left:572px"></b><b class="gd" style="left:644px"></b><span class="tx">                                content: r.orderInfo.errorMsg <span class="p">?</span> r.orderInfo.errorMsg <span class="p">:</span> <span class="y">&quot;充电状态长期处于未知状态，为了不影响您正常充电，现已将订单变更为异常订单&quot;</span>,</span></div>
<div class="ln" style="top:1315.7px"><span class="no">232</span><b class="gd" style="left:140px"></b><b class="gd" style="left:212px"></b><b class="gd" style="left:284px"></b><b class="gd" style="left:356px"></b><b class="gd" style="left:428px"></b><b class="gd" style="left:500px"></b><b class="gd" style="left:572px"></b><b class="gd" style="left:644px"></b><span class="tx">                                confirmText: <span class="y">&quot;好的&quot;</span>,</span></div>
<div class="ln" style="top:1351.7px"><span class="no">233</span><b class="gd" style="left:140px"></b><b class="gd" style="left:212px"></b><b class="gd" style="left:284px"></b><b class="gd" style="left:356px"></b><b class="gd" style="left:428px"></b><b class="gd" style="left:500px"></b><b class="gd" style="left:572px"></b><b class="gd" style="left:644px"></b><span class="tx">                                showCancel: <span class="p">!</span><span class="v">1</span>,</span></div>
<div class="ln" style="top:1387.7px"><span class="no">234</span><b class="gd" style="left:140px"></b><b class="gd" style="left:212px"></b><b class="gd" style="left:284px"></b><b class="gd" style="left:356px"></b><b class="gd" style="left:428px"></b><b class="gd" style="left:500px"></b><b class="gd" style="left:572px"></b><b class="gd" style="left:644px"></b><span class="tx">                                <span class="g">success</span>: <i class="b">function</i>() {</span></div>
<div class="ln" style="top:1423.7px"><span class="no">235</span><b class="gd" style="left:140px"></b><b class="gd" style="left:212px"></b><b class="gd" style="left:284px"></b><b class="gd" style="left:356px"></b><b class="gd" style="left:428px"></b><b class="gd" style="left:500px"></b><b class="gd" style="left:572px"></b><b class="gd" style="left:644px"></b><b class="gd" style="left:716px"></b><span class="tx">                                    e.<span class="b">redirectTo</span>({</span></div>
<div class="ln" style="top:1459.7px"><span class="no">236</span><b class="gd" style="left:140px"></b><b class="gd" style="left:212px"></b><b class="gd" style="left:284px"></b><b class="gd" style="left:356px"></b><b class="gd" style="left:428px"></b><b class="gd" style="left:500px"></b><b class="gd" style="left:572px"></b><b class="gd" style="left:644px"></b><b class="gd" style="left:716px"></b><b class="gd" style="left:788px"></b><span class="tx">                                        url: <span class="y">&quot;/pages/order/list&quot;</span></span></div>
<div class="ln" style="top:1495.7px"><span class="no">237</span><b class="gd" style="left:140px"></b><b class="gd" style="left:212px"></b><b class="gd" style="left:284px"></b><b class="gd" style="left:356px"></b><b class="gd" style="left:428px"></b><b class="gd" style="left:500px"></b><b class="gd" style="left:572px"></b><b class="gd" style="left:644px"></b><b class="gd" style="left:716px"></b><span class="tx">                                    });</span></div>
<div class="ln" style="top:1531.7px"><span class="no">238</span><b class="gd" style="left:140px"></b><b class="gd" style="left:212px"></b><b class="gd" style="left:284px"></b><b class="gd" style="left:356px"></b><b class="gd" style="left:428px"></b><b class="gd" style="left:500px"></b><b class="gd" style="left:572px"></b><b class="gd" style="left:644px"></b><span class="tx">                                }</span></div>
<div class="ln" style="top:1567.7px"><span class="no">239</span><b class="gd" style="left:140px"></b><b class="gd" style="left:212px"></b><b class="gd" style="left:284px"></b><b class="gd" style="left:356px"></b><b class="gd" style="left:428px"></b><b class="gd" style="left:500px"></b><b class="gd" style="left:572px"></b><span class="tx">                            });</span></div>
<div class="ln" style="top:1603.7px"><span class="no">240</span><b class="gd" style="left:140px"></b><b class="gd" style="left:212px"></b><b class="gd" style="left:284px"></b><b class="gd" style="left:356px"></b><b class="gd" style="left:428px"></b><b class="gd" style="left:500px"></b><span class="tx">                        });</span></div>
<div class="ln" style="top:1639.7px"><span class="no">241</span><b class="gd" style="left:140px"></b><b class="gd" style="left:212px"></b><b class="gd" style="left:284px"></b><b class="gd" style="left:356px"></b><b class="gd" style="left:428px"></b><span class="tx">                    },</span></div>
<div class="ln" style="top:1675.7px"><span class="no">242</span><b class="gd" style="left:140px"></b><b class="gd" style="left:212px"></b><b class="gd" style="left:284px"></b><b class="gd" style="left:356px"></b><b class="gd" style="left:428px"></b><span class="tx">                    <span class="g">operaCountDown</span>: <i class="b">function</i>(<i class="o">e</i>) {</span></div>
<div class="ln" style="top:1711.7px"><span class="no">243</span><b class="gd" style="left:140px"></b><b class="gd" style="left:212px"></b><b class="gd" style="left:284px"></b><b class="gd" style="left:356px"></b><b class="gd" style="left:428px"></b><b class="gd" style="left:500px"></b><span class="tx">                        <i class="b">var</i> r <span class="p">=</span> <i class="o">this</i>, t <span class="p">=</span> <i class="b">Number</i>(e);</span></div>
<div class="ln" style="top:1747.7px"><span class="no">244</span><b class="gd" style="left:140px"></b><b class="gd" style="left:212px"></b><b class="gd" style="left:284px"></b><b class="gd" style="left:356px"></b><b class="gd" style="left:428px"></b><b class="gd" style="left:500px"></b><span class="tx">                        t <span class="p">?</span> <span class="b">getApp</span>().globalData.chargInvalTime <span class="p">=</span> <span class="b">setInterval</span>(<i class="b">function</i>() {</span></div>
<div class="ln" style="top:1783.7px"><span class="no">245</span><b class="gd" style="left:140px"></b><b class="gd" style="left:212px"></b><b class="gd" style="left:284px"></b><b class="gd" style="left:356px"></b><b class="gd" style="left:428px"></b><b class="gd" style="left:500px"></b><b class="gd" style="left:572px"></b><span class="tx">                            t<span class="p">++</span><span class="p">,</span> <i class="b">console</i>.<span class="b">log</span>(t)<span class="p">,</span> r.chargingTime <span class="p">=</span> {</span></div>
<div class="ln" style="top:1819.7px"><span class="no">246</span><b class="gd" style="left:140px"></b><b class="gd" style="left:212px"></b><b class="gd" style="left:284px"></b><b class="gd" style="left:356px"></b><b class="gd" style="left:428px"></b><b class="gd" style="left:500px"></b><b class="gd" style="left:572px"></b><b class="gd" style="left:644px"></b><span class="tx">                                hours: <span class="b">parseInt</span>(t <span class="p">/</span> <span class="v">60</span> <span class="p">/</span> <span class="v">60</span>) <span class="p">&lt;</span> <span class="v">10</span> <span class="p">?</span> <span class="y">&quot;0&quot;</span> <span class="p">+</span> <span class="b">parseInt</span>(t <span class="p">/</span> <span class="v">60</span> <span class="p">/</span> <span class="v">60</span>) <span class="p">:</span> <span class="b">parseInt</span>(t <span class="p">/</span> <span class="v">60</span> <span class="p">/</span> <span class="v">60</span>),</span></div>
<div class="ln" style="top:1855.7px"><span class="no">247</span><b class="gd" style="left:140px"></b><b class="gd" style="left:212px"></b><b class="gd" style="left:284px"></b><b class="gd" style="left:356px"></b><b class="gd" style="left:428px"></b><b class="gd" style="left:500px"></b><b class="gd" style="left:572px"></b><b class="gd" style="left:644px"></b><span class="tx">                                minute: <span class="b">parseInt</span>(t <span class="p">/</span> <span class="v">60</span> <span class="p">%</span> <span class="v">60</span>) <span class="p">&lt;</span> <span class="v">10</span> <span class="p">?</span> <span class="y">&quot;0&quot;</span> <span class="p">+</span> <span class="b">parseInt</span>(t <span class="p">/</span> <span class="v">60</span> <span class="p">%</span> <span class="v">60</span>) <span class="p">:</span> <span class="b">parseInt</span>(t <span class="p">/</span> <span class="v">60</span> <span class="p">%</span> <span class="v">60</span>),</span></div>
<div class="ln" style="top:1891.7px"><span class="no">248</span><b class="gd" style="left:140px"></b><b class="gd" style="left:212px"></b><b class="gd" style="left:284px"></b><b class="gd" style="left:356px"></b><b class="gd" style="left:428px"></b><b class="gd" style="left:500px"></b><b class="gd" style="left:572px"></b><b class="gd" style="left:644px"></b><span class="tx">                                second: <span class="b">parseInt</span>(t <span class="p">%</span> <span class="v">60</span>) <span class="p">&lt;</span> <span class="v">10</span> <span class="p">?</span> <span class="y">&quot;0&quot;</span> <span class="p">+</span> <span class="b">parseInt</span>(t <span class="p">%</span> <span class="v">60</span>) <span class="p">:</span> <span class="b">parseInt</span>(t <span class="p">%</span> <span class="v">60</span>)</span></div>
<div class="ln" style="top:1927.7px"><span class="no">249</span><b class="gd" style="left:140px"></b><b class="gd" style="left:212px"></b><b class="gd" style="left:284px"></b><b class="gd" style="left:356px"></b><b class="gd" style="left:428px"></b><b class="gd" style="left:500px"></b><b class="gd" style="left:572px"></b><span class="tx">                            };</span></div>
<div class="ln" style="top:1963.7px"><span class="no">250</span><b class="gd" style="left:140px"></b><b class="gd" style="left:212px"></b><b class="gd" style="left:284px"></b><b class="gd" style="left:356px"></b><b class="gd" style="left:428px"></b><b class="gd" style="left:500px"></b><span class="tx">                        }, <span class="v">1e3</span>) <span class="p">:</span> <i class="o">this</i>.chargingTime <span class="p">=</span> {</span></div>
<div class="ln" style="top:1999.7px"><span class="no">251</span><b class="gd" style="left:140px"></b><b class="gd" style="left:212px"></b><b class="gd" style="left:284px"></b><b class="gd" style="left:356px"></b><b class="gd" style="left:428px"></b><b class="gd" style="left:500px"></b><b class="gd" style="left:572px"></b><span class="tx">                            hours: <span class="y">&quot;-&quot;</span></span></div>
<div class="rb" style="left:631.5px;top:443px;width:1719.5px;height:78.20000000000005px"></div><div class="rb" style="left:606px;top:1051.5px;width:1200px;height:92.5px"></div><div class="rb" style="left:615px;top:1163.5px;width:1339.5px;height:94.5px"></div>
</div>
<div class="mm"><pre>(global.webpackJsonp <span class="p">=</span> global.webpackJsonp <span class="p">||</span> []).<span class="b">push</span>([ [ <span class="y">&quot;pages/charging/chargingProcess&quot;</span> ], {
    <span class="y">&quot;1ae5&quot;</span>: <i class="b">function</i>(e, r, t) {
        t.<span class="b">r</span>(r);
        <i class="b">var</i> n <span class="p">=</span> <span class="b">t</span>(<span class="y">&quot;662e&quot;</span>), o <span class="p">=</span> t.<span class="b">n</span>(n);
        <span class="p">for</span> (<i class="b">var</i> a <span class="p">in</span> n) <span class="y">&quot;default&quot;</span> <span class="p">!=</span><span class="p">=</span> a <span class="p">&amp;&amp;</span> <i class="b">function</i>(<i class="o">e</i>) {
            t.<span class="b">d</span>(r, e, <i class="b">function</i>() {
                <span class="p">return</span> n[e];
            });
        }(a);
        r.default <span class="p">=</span> o.a;
    },
    <span class="y">&quot;3d3a&quot;</span>: <i class="b">function</i>(e, r, t) {
        <i class="b">var</i> n <span class="p">=</span> <span class="b">t</span>(<span class="y">&quot;b5d9&quot;</span>);
        t.<span class="b">n</span>(n).a;
    },
    <span class="y">&quot;57b6&quot;</span>: <i class="b">function</i>(e, r, t) {
        (<i class="b">function</i>(<i class="o">e</i>) {
            <i class="b">function</i> <span class="b">r</span>(e) {
                <span class="p">return</span> e <span class="p">&amp;&amp;</span> e.__esModule <span class="p">?</span> e : {
                    default: e
                };
            }
            <span class="b">t</span>(<span class="y">&quot;e1d7&quot;</span>), <span class="b">r</span>(<span class="b">t</span>(<span class="y">&quot;66fd&quot;</span>)), <span class="b">e</span>(<span class="b">r</span>(<span class="b">t</span>(<span class="y">&quot;f49d&quot;</span>)).default);
        }).<span class="b">call</span>(<i class="o">this</i>, <span class="b">t</span>(<span class="y">&quot;543d&quot;</span>).createPage);
    },
    <span class="y">&quot;662e&quot;</span>: <i class="b">function</i>(e, r, t) {
        (<i class="b">function</i>(<i class="o">e</i>) {
            <i class="b">function</i> <span class="b">n</span>(e) {
                <span class="p">return</span> e <span class="p">&amp;&amp;</span> e.__esModule <span class="p">?</span> e : {
                    default: e
                };
            }
            <i class="b">function</i> <span class="b">o</span>(e, r, t, n, o, a, i) {
                <span class="p">try</span> {
                    <i class="b">var</i> s <span class="p">=</span> e[a](i), c <span class="p">=</span> s.value;
                } <span class="p">catch</span> (e) {
                    <span class="p">return</span> <span class="p">void</span> <span class="b">t</span>(e);
                }
                s.done <span class="p">?</span> <span class="b">r</span>(c) : <i class="b">Promise</i>.<span class="b">resolve</span>(c).<span class="b">then</span>(n, o);
            }
            <i class="b">function</i> <span class="b">a</span>(e) {
                <span class="p">return</span> <i class="b">function</i>() {
                    <i class="b">var</i> r <span class="p">=</span> <i class="o">this</i>, t <span class="p">=</span> <i class="o">arguments</i>;
                    <span class="p">return</span> <span class="p">new</span> <i class="b">Promise</i>(<i class="b">function</i>(n, a) {
                        <i class="b">function</i> <span class="b">i</span>(e) {
                            <span class="b">o</span>(s, n, a, i, c, <span class="y">&quot;next&quot;</span>, e);
                        }
                        <i class="b">function</i> <span class="b">c</span>(e) {
                            <span class="b">o</span>(s, n, a, i, c, <span class="y">&quot;throw&quot;</span>, e);
                        }
                        <i class="b">var</i> s <span class="p">=</span> e.<span class="b">apply</span>(r, t);
                        <span class="b">i</span>(<span class="p">void</span> <span class="v">0</span>);
                    });
                };
            }
            <i class="b">function</i> <span class="b">i</span>(e, r) {
                <i class="b">var</i> t <span class="p">=</span> <i class="b">Object</i>.<span class="b">keys</span>(e);
                <span class="p">if</span> (<i class="b">Object</i>.getOwnPropertySymbols) {
                    <i class="b">var</i> n <span class="p">=</span> <i class="b">Object</i>.<span class="b">getOwnPropertySymbols</span>(e);
                    r <span class="p">&amp;&amp;</span> (n <span class="p">=</span> n.<span class="b">filter</span>(<i class="b">function</i>(<i class="o">r</i>) {
                        <span class="p">return</span> <i class="b">Object</i>.<span class="b">getOwnPropertyDescriptor</span>(e, r).enumerable;
                    })), t.push.<span class="b">apply</span>(t, n);
                }
                <span class="p">return</span> t;
            }
            <i class="b">function</i> <span class="b">s</span>(e) {
                <span class="p">for</span> (<i class="b">var</i> r <span class="p">=</span> <span class="v">1</span>; r <span class="p">&lt;</span> <i class="o">arguments</i>.length; r<span class="p">++</span>) {
                    <i class="b">var</i> t <span class="p">=</span> <span class="v">null</span> <span class="p">!=</span> <i class="o">arguments</i>[r] <span class="p">?</span> <i class="o">arguments</i>[r] : {};
                    r <span class="p">%</span> <span class="v">2</span> <span class="p">?</span> <span class="b">i</span>(<i class="b">Object</i>(t), <span class="p">!</span><span class="v">0</span>).<span class="b">forEach</span>(<i class="b">function</i>(<i class="o">r</i>) {
                        <span class="b">c</span>(e, r, t[r]);
                    }) : <i class="b">Object</i>.getOwnPropertyDescriptors <span class="p">?</span> <i class="b">Object</i>.<span class="b">defineProperties</span>(e, <i class="b">Object</i>.<span class="b">getOwnPropertyDescriptors</span>(t)) : <span class="b">i</span>(<i class="b">Object</i>(t)).<span class="b">forEach</span>(<i class="b">function</i>(<i class="o">r</i>) {
                        <i class="b">Object</i>.<span class="b">defineProperty</span>(e, r, <i class="b">Object</i>.<span class="b">getOwnPropertyDescriptor</span>(t, r));
                    });
                }
                <span class="p">return</span> e;
            }
            <i class="b">function</i> <span class="b">c</span>(e, r, t) {
                <span class="p">return</span> r <span class="p">in</span> e <span class="p">?</span> <i class="b">Object</i>.<span class="b">defineProperty</span>(e, r, {
                    value: t,
                    enumerable: <span class="p">!</span><span class="v">0</span>,
                    configurable: <span class="p">!</span><span class="v">0</span>,
                    writable: <span class="p">!</span><span class="v">0</span>
                }) : e[r] <span class="p">=</span> t, e;
            }
            <i class="b">Object</i>.<span class="b">defineProperty</span>(r, <span class="y">&quot;__esModule&quot;</span>, {
                value: <span class="p">!</span><span class="v">0</span>
            }), r.default <span class="p">=</span> <span class="p">void</span> <span class="v">0</span>;
            <i class="b">var</i> d <span class="p">=</span> <span class="b">n</span>(<span class="b">t</span>(<span class="y">&quot;a34a&quot;</span>)), u <span class="p">=</span> <span class="b">t</span>(<span class="y">&quot;2f62&quot;</span>), l <span class="p">=</span> <span class="b">t</span>(<span class="y">&quot;3fd6&quot;</span>);
            <span class="b">n</span>(<span class="b">t</span>(<span class="y">&quot;4478&quot;</span>)), <span class="b">n</span>(<span class="b">t</span>(<span class="y">&quot;5ebe&quot;</span>));
            <i class="b">var</i> h <span class="p">=</span> {
                computed: <span class="b">s</span>({}, (<span class="v">0</span>, u.mapState)([ <span class="y">&quot;orderId&quot;</span>, <span class="y">&quot;waiverStationInfo&quot;</span> ])),
                <span class="g">data</span>: <i class="b">function</i>() {
                    <span class="p">return</span> {
                        plateNo: <span class="y">&quot;&quot;</span>,
                        popupIsShow: <span class="p">!</span><span class="v">1</span>,
                        waiverStation: <span class="v">null</span>,
                        iphoneHeight: <span class="y">&quot;&quot;</span>,
                        canvas: <span class="v">null</span>,
                        radaisWidth: <span class="v">250</span>,
                        radaisHeight: <span class="v">250</span>,
                        indicatorDots: <span class="p">!</span><span class="v">1</span>,
                        order: {
                            orderId: <span class="y">&quot;&quot;</span>
                        },
                        orderInfo: {},
                        chargingNo: <span class="p">!</span><span class="v">1</span>,
                        chargingTime: {
                            hours: <span class="y">&quot;00&quot;</span>,
                            minute: <span class="y">&quot;00&quot;</span>,
                            second: <span class="y">&quot;00&quot;</span>
                        },
                        finishOrder: {},
                        finishType: <span class="p">!</span><span class="v">1</span>,
                        left_time: {},
                        switchIndex: <span class="v">0</span>,
                        checkWaiver: <span class="p">!</span><span class="v">1</span>,
                        countDownDri: <span class="y">&quot;60.0&quot;</span>,
                        isFromStartCountDown: <span class="p">!</span><span class="v">0</span>
                    };
                },
                <span class="g">onLoad</span>: <i class="b">function</i>(<i class="o">e</i>) {
                    <i class="o">this</i>.isFromStartCountDown <span class="p">=</span> <span class="p">!</span><span class="p">!</span>e.isCountDown, <i class="b">console</i>.<span class="b">log</span>(<i class="o">this</i>.isFromStartCountDown, <span class="y">&quot;this.isFromStartCountDown&quot;</span>),
                    <i class="o">this</i>.isFromStartCountDown <span class="p">?</span> <i class="o">this</i>.<span class="b">countDown</span>() : <span class="b">clearInterval</span>(<span class="b">getApp</span>().globalData.countDownTimer),
                    <i class="o">this</i>.iphoneHeight <span class="p">=</span> <span class="v">2</span> * <i class="o">this</i>.$config.iphoneSystem.windowHeight - <span class="v">100</span> <span class="p">+</span> <span class="y">&quot;rpx&quot;</span>, <i class="o">this</i>.order.orderId <span class="p">=</span> e.orderId <span class="p">||</span> <i class="o">this</i>.orderId,
                    <i class="o">this</i>.waiverStation <span class="p">=</span> e.waiverStation <span class="p">?</span> <i class="b">JSON</i>.<span class="b">parse</span>(e.waiverStation) : <span class="v">null</span>, <i class="b">console</i>.<span class="b">log</span>(<span class="y">&quot;页面参数信息获取到拉~~&quot;</span>, e),
                    <i class="b">console</i>.<span class="b">log</span>(<i class="o">this</i>.order.orderId, <span class="y">&quot;this.order.orderId&quot;</span>), <i class="o">this</i>.<span class="b">operaGetOrderDetail</span>();
                },
                <span class="g">onShow</span>: <i class="b">function</i>() {
                    <i class="b">var</i> e <span class="p">=</span> <i class="o">this</i>;
                    <i class="o">this</i>.<span class="b">getWaiverStation</span>(), <i class="o">this</i>.order.orderId <span class="p">&amp;&amp;</span> <i class="o">this</i>.<span class="b">operaGetOrderDetail</span>(), <i class="b">console</i>.<span class="b">log</span>(<i class="o">this</i>.order.orderId, <span class="y">&quot;orderId==&quot;</span>),
                    <span class="b">setTimeout</span>(<i class="b">function</i>() {
                        e.checkWaiver <span class="p">=</span> <span class="p">!</span><span class="v">0</span>;
                    }, <span class="v">300</span>);
                },
                <span class="g">onReady</span>: <i class="b">function</i>() {
                    <i class="o">this</i>.<span class="b">operaChargingRaduis</span>(<span class="v">0</span>);
                },
                <span class="g">destroyed</span>: <i class="b">function</i>() {
                    <span class="b">clearInterval</span>(<span class="b">getApp</span>().globalData.countDownTimer);
                },
                methods: {
                    <span class="g">countDown</span>: <i class="b">function</i>() {
                        <i class="b">var</i> e <span class="p">=</span> <i class="o">this</i>;
                        <span class="b">clearInterval</span>(<span class="b">getApp</span>().globalData.countDownTimer), <span class="b">getApp</span>().globalData.countDownTimer <span class="p">=</span> <span class="b">setInterval</span>(<i class="b">function</i>() {
                            <span class="p">if</span> (e.countDownDri <span class="p">&gt;</span> <span class="v">0</span>) e.countDownDri -<span class="p">=</span> <span class="v">.1</span>, <span class="b">clearInterval</span>(<span class="b">getApp</span>().globalData.countDownTimer),
                            e.<span class="b">operaChargingRadaisCountDown</span>(<span class="v">100</span>); <span class="p">else</span> {
                                e.countDownDri <span class="p">=</span> (<span class="v">100</span> * e.countDownDri - <span class="v">10</span>) <span class="p">/</span> <span class="v">100</span>, e.countDownDri <span class="p">=</span> e.countDownDri.<span class="b">toFixed</span>(<span class="v">1</span>);
                                <i class="b">var</i> r <span class="p">=</span> (<span class="v">100</span> - e.countDownDri <span class="p">/</span> <span class="v">60</span> * <span class="v">100</span>).<span class="b">toFixed</span>(<span class="v">0</span>);
                                e.<span class="b">operaChargingRadaisCountDown</span>(r);
                            }
                        }, <span class="v">100</span>);
                    },
                    <span class="g">getWaiverStation</span>: <i class="b">function</i>() {
                        <i class="b">var</i> e <span class="p">=</span> <i class="o">this</i>;
                        <span class="p">return</span> <span class="b">a</span>(d.default.<span class="b">mark</span>(<i class="b">function</i> <span class="b">r</span>() {
                            <i class="b">var</i> t, n;
                            <span class="p">return</span> d.default.<span class="b">wrap</span>(<i class="b">function</i>(<i class="o">r</i>) {
                                <span class="p">for</span> (;;) <span class="p">switch</span> (r.prev <span class="p">=</span> r.next) {
                                  <span class="p">case</span> <span class="v">0</span>:
                                    <span class="p">if</span> (<i class="b">console</i>.<span class="b">log</span>(<span class="y">&quot;minano&quot;</span>), t <span class="p">=</span> e.waiverStationInfo <span class="p">||</span> e.$common.<span class="b">storageGet</span>(<span class="y">&quot;waiverStationInfo&quot;</span>),
                                    <i class="b">console</i>.<span class="b">log</span>(e.$common.<span class="b">storageGet</span>(<span class="y">&quot;waiverStationInfo&quot;</span>), &#x27;<i class="o">this</i>.$common.<span class="b">storageGet</span>(<span class="y">&quot;waiverStationInfo&quot;</span>)&#x27;),
                                    <i class="b">console</i>.<span class="b">log</span>(e.waiverStation, <span class="y">&quot;this.waiverStation12323&quot;</span>), <i class="b">console</i>.<span class="b">log</span>(e.waiverStationInfo, <span class="y">&quot;this.waiverStationInfo&quot;</span>),
                                    <span class="p">!</span>(t <span class="p">&amp;&amp;</span> t.stationId <span class="p">&amp;&amp;</span> t.protocolType <span class="p">&amp;&amp;</span> t.operatorId)) {
                                        r.next <span class="p">=</span> <span class="v">11</span>;
                                        <span class="p">break</span>;
                                    }
                                    <span class="p">return</span> r.next <span class="p">=</span> <span class="v">8</span>, (<span class="v">0</span>, l.waiverStation)(<span class="b">s</span>(<span class="b">s</span>({}, t), {}, {
                                        orderNo: e.orderNo
                                    }));

                                  <span class="p">case</span> <span class="v">8</span>:
                                    n <span class="p">=</span> r.sent, e.plateNo <span class="p">=</span> n.plateNo, <i class="b">console</i>.<span class="b">log</span>(e.plateNo, <span class="y">&quot;this.plateNoxx kakan &quot;</span>);

                                  <span class="p">case</span> <span class="v">11</span>:
                                  <span class="p">case</span> <span class="y">&quot;end&quot;</span>:
                                    <span class="p">return</span> r.<span class="b">stop</span>();
                                }
                            }, r);
                        }))();
                    },
                    <span class="g">customerPopShow</span>: <i class="b">function</i>() {
                        <i class="o">this</i>.popupIsShow <span class="p">=</span> <span class="p">!</span><span class="v">0</span>;
                    },
                    <span class="g">customerPopClose</span>: <i class="b">function</i>() {
                        <i class="b">var</i> e <span class="p">=</span> <i class="o">this</i>;
                        <span class="b">setTimeout</span>(<i class="b">function</i>() {
                            e.popupIsShow <span class="p">=</span> <span class="p">!</span><span class="v">1</span>;
                        }, <span class="v">100</span>);
                    },
                    <span class="g">operaGetScan</span>: <i class="b">function</i>() {
                        <i class="b">var</i> e <span class="p">=</span> <i class="o">this</i>;
                        (<span class="v">0</span>, l.scan)({
                            qrCode: <i class="o">this</i>.$store.state.scanInfo.qrCode
                        }).<span class="b">then</span>(<i class="b">function</i>(<i class="o">r</i>) {
                            <span class="p">if</span> (r) {
                                <i class="b">var</i> t <span class="p">=</span> r.stationId, o <span class="p">=</span> r.operatorId, n <span class="p">=</span> r.protocolType;
                                e.waiverStation <span class="p">=</span> {
                                    stationId: t,
                                    operatorId: o,
                                    protocolType: n
                                }<span class="p">,</span> <i class="b">console</i>.<span class="b">log</span>(e.waiverStation, <span class="y">&quot;this.waiverStation321&quot;</span>)<span class="p">,</span> e.$common.<span class="b">storageSet</span>(<span class="y">&quot;waiverStationInfo&quot;</span>, e.waiverStation)<span class="p">,</span>
                                e.$store.<span class="b">commit</span>(<span class="y">&quot;SET_WAIVER_STATION_INFO&quot;</span>, e.waiverStation);
                            }
                        }).<span class="b">catch</span>(<i class="b">function</i>(<i class="o">e</i>) {});
                    },
                    <span class="g">changeCar</span>: <i class="b">function</i>() {
                        <i class="o">this</i>.checkWaiver <span class="p">=</span> <span class="p">!</span><span class="v">1</span><span class="p">,</span> e.<span class="b">navigateTo</span>({
                            url: <span class="y">&quot;/pages/carManagement/carList?params=2&amp;type=process&amp;orderId=&quot;</span>.<span class="b">concat</span>(<i class="o">this</i>.order.orderId)
                        });
                    },
                    <span class="g">operaGetOrderDetail</span>: <i class="b">function</i>() {
                        <i class="b">var</i> r <span class="p">=</span> <i class="o">this</i>;
                        <i class="b">console</i>.<span class="b">log</span>(<span class="y">&quot;请求订单中。。。。。。。&quot;</span>)<span class="p">,</span> (<span class="v">0</span><span class="p">,</span> l.chargingOrderDetail)({
                            orderNo: <i class="o">this</i>.order.orderId
                        }).<span class="b">then</span>(<i class="b">function</i>(<i class="o">t</i>) {
                            <i class="b">console</i>.<span class="b">log</span>(t, <span class="y">&quot;订单详情信息获取到拉~~&quot;</span>)<span class="p">,</span> r.<span class="b">operaClearInterval</span>()<span class="p">,</span> r.orderInfo <span class="p">=</span> t <span class="p">||</span> {}<span class="p">,</span> <span class="v">1</span> <span class="p">==</span> r.orderInfo.orderState <span class="p">&amp;&amp;</span> (r.isCharging <span class="p">=</span> <span class="p">!</span><span class="v">0</span>)<span class="p">,</span>
                            <span class="v">2</span> <span class="p">==</span> r.orderInfo.orderState <span class="p">&amp;&amp;</span> (r.isFromStartCountDown <span class="p">=</span> <span class="p">!</span><span class="v">1</span><span class="p">,</span> <span class="b">clearInterval</span>(<span class="b">getApp</span>().globalData.countDownTimer))<span class="p">,</span>
                            r.orderInfo.orderState <span class="p">&gt;</span> <span class="v">1</span> <span class="p">&amp;&amp;</span> r.<span class="b">operaChargingRaduis</span>(r.orderInfo.soc <span class="p">||</span> <span class="v">0</span>)<span class="p">,</span> <i class="b">console</i>.<span class="b">log</span>(r.orderInfo, <span class="y">&quot;this.orderInfo&quot;</span>)<span class="p">,</span>
                            r.finishType <span class="p">=</span> <span class="p">!</span>(r.orderInfo.orderState <span class="p">&gt;</span> <span class="v">2</span>);
                            <i class="b">var</i> o <span class="p">=</span> r.orderInfo.leftChargingTime <span class="p">||</span> <span class="v">0</span>;
                            o <span class="p">&amp;&amp;</span> (r.left_time <span class="p">=</span> r.<span class="b">getMinutesHour</span>(o))<span class="p">,</span> r.<span class="b">operaCountDown</span>(r.orderInfo.chargingTime <span class="p">||</span> <span class="v">0</span>)<span class="p">,</span>
                            <span class="y">&quot;-1&quot;</span> <span class="p">!=</span> r.orderInfo.orderState <span class="p">?</span> (r.orderInfo.orderState <span class="p">&lt;</span> <span class="v">5</span> <span class="p">&amp;&amp;</span> (<span class="b">getApp</span>().globalData.checkOrderInval <span class="p">=</span> <span class="b">setInterval</span>(<i class="b">function</i>() {
                                r.<span class="b">operaGetOrderDetail</span>();
                            }, <span class="v">1e4</span>))<span class="p">,</span> <span class="v">5</span> <span class="p">!=</span> r.orderInfo.orderState <span class="p">&amp;&amp;</span> <span class="v">6</span> <span class="p">!=</span> r.orderInfo.orderState <span class="p">||</span> (r.<span class="b">operaClearInterval</span>()<span class="p">,</span>
                            e.<span class="b">redirectTo</span>({
                                url: <span class="y">&quot;/pages/order/detail?orderNo=&quot;</span> <span class="p">+</span> r.orderInfo.orderNo
                            }))<span class="p">,</span> <span class="v">7</span> <span class="p">!=</span> r.orderInfo.orderState <span class="p">&amp;&amp;</span> <span class="v">8</span> <span class="p">!=</span> r.orderInfo.orderState <span class="p">||</span> (r.<span class="b">operaClearInterval</span>()<span class="p">,</span>
                            e.<span class="b">redirectTo</span>({
                                url: <span class="y">&quot;/pages/payment/paymentSuccess?orderNo=&quot;</span> <span class="p">+</span> r.orderInfo.orderNo
                            }))) <span class="p">:</span> r.$common.<span class="b">showModel</span>({
                                content: r.orderInfo.errorMsg <span class="p">?</span> r.orderInfo.errorMsg <span class="p">:</span> <span class="y">&quot;充电状态长期处于未知状态，为了不影响您正常充电，现已将订单变更为异常订单&quot;</span>,
                                confirmText: <span class="y">&quot;好的&quot;</span>,
                                showCancel: <span class="p">!</span><span class="v">1</span>,
                                <span class="g">success</span>: <i class="b">function</i>() {
                                    e.<span class="b">redirectTo</span>({
                                        url: <span class="y">&quot;/pages/order/list&quot;</span>
                                    });
                                }
                            });
                        });
                    },
                    <span class="g">operaCountDown</span>: <i class="b">function</i>(<i class="o">e</i>) {
                        <i class="b">var</i> r <span class="p">=</span> <i class="o">this</i>, t <span class="p">=</span> <i class="b">Number</i>(e);
                        t <span class="p">?</span> <span class="b">getApp</span>().globalData.chargInvalTime <span class="p">=</span> <span class="b">setInterval</span>(<i class="b">function</i>() {
                            t<span class="p">++</span><span class="p">,</span> <i class="b">console</i>.<span class="b">log</span>(t)<span class="p">,</span> r.chargingTime <span class="p">=</span> {
                                hours: <span class="b">parseInt</span>(t <span class="p">/</span> <span class="v">60</span> <span class="p">/</span> <span class="v">60</span>) <span class="p">&lt;</span> <span class="v">10</span> <span class="p">?</span> <span class="y">&quot;0&quot;</span> <span class="p">+</span> <span class="b">parseInt</span>(t <span class="p">/</span> <span class="v">60</span> <span class="p">/</span> <span class="v">60</span>) <span class="p">:</span> <span class="b">parseInt</span>(t <span class="p">/</span> <span class="v">60</span> <span class="p">/</span> <span class="v">60</span>),
                                minute: <span class="b">parseInt</span>(t <span class="p">/</span> <span class="v">60</span> <span class="p">%</span> <span class="v">60</span>) <span class="p">&lt;</span> <span class="v">10</span> <span class="p">?</span> <span class="y">&quot;0&quot;</span> <span class="p">+</span> <span class="b">parseInt</span>(t <span class="p">/</span> <span class="v">60</span> <span class="p">%</span> <span class="v">60</span>) <span class="p">:</span> <span class="b">parseInt</span>(t <span class="p">/</span> <span class="v">60</span> <span class="p">%</span> <span class="v">60</span>),
                                second: <span class="b">parseInt</span>(t <span class="p">%</span> <span class="v">60</span>) <span class="p">&lt;</span> <span class="v">10</span> <span class="p">?</span> <span class="y">&quot;0&quot;</span> <span class="p">+</span> <span class="b">parseInt</span>(t <span class="p">%</span> <span class="v">60</span>) <span class="p">:</span> <span class="b">parseInt</span>(t <span class="p">%</span> <span class="v">60</span>)
                            };
                        }, <span class="v">1e3</span>) <span class="p">:</span> <i class="o">this</i>.chargingTime <span class="p">=</span> {
                            hours: <span class="y">&quot;-&quot;</span>
                            minute: <span class="y">&quot;-&quot;</span>,
                            second: <span class="y">&quot;-&quot;</span>
                        };
                    },
                    <span class="g">getMinutesHour</span>: <i class="b">function</i>(<i class="o">e</i>) {
                        <span class="p">return</span> {
                            hours: <i class="b">Math</i>.<span class="b">floor</span>(e <span class="p">/</span> <span class="v">3600</span>),
                            minutes: <i class="b">Math</i>.<span class="b">floor</span>(e <span class="p">%</span> <span class="v">3600</span> <span class="p">/</span> <span class="v">60</span>),
                            seconds: <i class="b">Math</i>.<span class="b">floor</span>(e <span class="p">%</span> <span class="v">3600</span> <span class="p">%</span> <span class="v">60</span>)
                        };
                    },
                    <span class="g">operaCloseCharging</span>: <i class="b">function</i>() {
                        <i class="b">var</i> r <span class="p">=</span> <i class="o">this</i>;
                        <i class="o">this</i>.<span class="b">operaClearInterval</span>(), <i class="o">this</i>.chargingNo <span class="p">=</span> <span class="p">!</span><span class="v">0</span>, e.<span class="b">showLoading</span>({
                            title: <span class="y">&quot;正在停止&quot;</span>
                        }), <i class="o">this</i>.$uma.<span class="b">trackEvent</span>(<span class="y">&quot;charging_over&quot;</span>), (<span class="v">0</span>, l.chargingStop)({
                            orderNo: <i class="o">this</i>.order.orderId,
                            errorCode: <span class="y">&quot;chargingStop&quot;</span>
                        }).<span class="b">then</span>(<i class="b">function</i>(<i class="o">t</i>) {
                            <span class="p">if</span> (t.code) {
                                <span class="p">if</span> (r.finishOrder <span class="p">=</span> t <span class="p">||</span> {}, r.<span class="b">operaClearInterval</span>(), <i class="b">console</i>.<span class="b">log</span>(r.finishOrder.orderState <span class="p">+</span> <span class="y">&quot;=========================&quot;</span>),
                                <span class="y">&quot;-1&quot;</span> <span class="p">==</span> r.finishOrder.orderState) <span class="p">return</span> <span class="p">void</span> r.$common.<span class="b">showModel</span>({
                                    content: r.finishOrder.errorMsg <span class="p">?</span> r.finishOrder.errorMsg : <span class="y">&quot;停止充电状态长期处于未知状态，为了不影响您正常充电，现已将订单变更为异常订单&quot;</span>,
                                    confirmText: <span class="y">&quot;好的&quot;</span>,
                                    showCancel: <span class="p">!</span><span class="v">1</span>,
                                    <span class="g">success</span>: <i class="b">function</i>() {
                                        e.<span class="b">redirectTo</span>({
                                            url: <span class="y">&quot;/pages/order/list&quot;</span>
                                        });
                                    }
                                });
                                r.finishOrder.orderState <span class="p">&gt;</span> <span class="v">2</span> <span class="p">&amp;&amp;</span> r.finishOrder.orderState <span class="p">&lt;</span> <span class="v">5</span> <span class="p">&amp;&amp;</span> (r.finishType <span class="p">=</span> <span class="p">!</span><span class="v">0</span>),
                                r.<span class="b">operaGetOrderDetail</span>(), <span class="v">5</span> <span class="p">!=</span> r.finishOrder.orderState <span class="p">&amp;&amp;</span> <span class="v">6</span> <span class="p">!=</span> r.finishOrder.orderState <span class="p">||</span> e.<span class="b">redirectTo</span>({
                                    url: <span class="y">&quot;/pages/order/detail?orderNo=&quot;</span> <span class="p">+</span> r.finishOrder.orderNo
                                }), <span class="v">7</span> <span class="p">!=</span> r.finishOrder.orderState <span class="p">&amp;&amp;</span> <span class="v">8</span> <span class="p">!=</span> r.finishOrder.orderState <span class="p">||</span> e.<span class="b">redirectTo</span>({
                                    url: <span class="y">&quot;/pages/payment/paymentSuccess?orderNo=&quot;</span> <span class="p">+</span> r.finishOrder.orderNo
                                }), <span class="b">getApp</span>().globalData.finishOrderInval <span class="p">=</span> <span class="b">setInterval</span>(<i class="b">function</i>() {
                                    r.<span class="b">operaGetOrderDetail</span>();
                                }, <span class="v">3e3</span>);
                            }
                            r.chargingNo <span class="p">=</span> <span class="p">!</span><span class="v">1</span>, e.<span class="b">hideLoading</span>();
                        });
                    },
                    <span class="g">operaClearInterval</span>: <i class="b">function</i>() {
                        <i class="b">console</i>.<span class="b">log</span>(<span class="v">11</span>), <span class="b">clearInterval</span>(<span class="b">getApp</span>().globalData.checkOrderInval), <span class="b">clearInterval</span>(<span class="b">getApp</span>().globalData.chargInvalTime),
                        <span class="b">clearInterval</span>(<span class="b">getApp</span>().globalData.finishOrderInval);
                    },
                    <span class="g">operaChargingRadaisCountDown</span>: <i class="b">function</i>(<i class="o">r</i>) {
                        <i class="b">console</i>.<span class="b">log</span>(r, <span class="y">&quot;wwwwwwwwwwwwwwwwwwwwwwwwwwwwwwwwwwwwwwwwwwwwwwwwwwwwwwww&quot;</span>);
                        <i class="b">var</i> t <span class="p">=</span> e.<span class="b">createCanvasContext</span>(<span class="y">&quot;batteryCanvas&quot;</span>), n <span class="p">=</span> <i class="o">this</i>.radaisWidth <span class="p">/</span> <span class="v">2</span> - <span class="v">12</span>, o <span class="p">=</span> -<span class="v">.5</span> * <i class="b">Math</i>.PI, a <span class="p">=</span> <span class="v">1.5</span> * <span class="v">2</span> * r <span class="p">/</span> <span class="v">100</span> * <i class="b">Math</i>.PI;
                        t.lineWidth <span class="p">=</span> <span class="v">6</span>, t.<span class="b">beginPath</span>(), t.<span class="b">arc</span>(<i class="o">this</i>.radaisWidth <span class="p">/</span> <span class="v">2</span>, <i class="o">this</i>.radaisHeight <span class="p">/</span> <span class="v">2</span>, n, o, <span class="v">2.5</span> * <i class="b">Math</i>.PI),
                        t.strokeStyle <span class="p">=</span> <span class="y">&quot;#eeeeee&quot;</span>, t.<span class="b">stroke</span>(), t.lineWidth <span class="p">=</span> <span class="v">6</span>, t.<span class="b">beginPath</span>(), t.<span class="b">arc</span>(<i class="o">this</i>.radaisWidth <span class="p">/</span> <span class="v">2</span>, <i class="o">this</i>.radaisHeight <span class="p">/</span> <span class="v">2</span>, n, o, a),
                        t.strokeStyle <span class="p">=</span> <i class="o">this</i>.finishType <span class="p">?</span> <span class="y">&quot;#00CC66&quot;</span> : <span class="y">&quot;#FD8032&quot;</span>, t.<span class="b">stroke</span>(), t.lineWidth <span class="p">=</span> <span class="v">8</span>,
                        t.<span class="b">beginPath</span>(), t.<span class="b">drawImage</span>(<span class="y">&quot;../../static/images/countIng.png&quot;</span>, n - <span class="v">8</span>, o - <span class="v">8</span>, <span class="v">16</span>, <span class="v">16</span>),
                        t.<span class="b">stroke</span>(), t.<span class="b">draw</span>();
                    },
                    <span class="g">operaChargingRaduis</span>: <i class="b">function</i>(<i class="o">r</i>) {
                        <i class="b">var</i> t <span class="p">=</span> e.<span class="b">createCanvasContext</span>(<span class="y">&quot;batteryCanvas&quot;</span>), n <span class="p">=</span> <i class="o">this</i>.radaisWidth <span class="p">/</span> <span class="v">2</span> - <span class="v">12</span>, o <span class="p">=</span> -<span class="v">.5</span> * <i class="b">Math</i>.PI, a <span class="p">=</span> <span class="v">1.5</span> * <span class="v">2</span> * r <span class="p">/</span> <span class="v">100</span> * <i class="b">Math</i>.PI;
                        t.lineWidth <span class="p">=</span> <span class="v">6</span>, t.<span class="b">beginPath</span>(), t.<span class="b">arc</span>(<i class="o">this</i>.radaisWidth <span class="p">/</span> <span class="v">2</span>, <i class="o">this</i>.radaisHeight <span class="p">/</span> <span class="v">2</span>, n, o, <span class="v">2.5</span> * <i class="b">Math</i>.PI),
                        t.strokeStyle <span class="p">=</span> <span class="y">&quot;#eeeeee&quot;</span>, t.<span class="b">stroke</span>(), t.lineWidth <span class="p">=</span> <span class="v">6</span>, t.<span class="b">beginPath</span>(), t.<span class="b">arc</span>(<i class="o">this</i>.radaisWidth <span class="p">/</span> <span class="v">2</span>, <i class="o">this</i>.radaisHeight <span class="p">/</span> <span class="v">2</span>, n, o, a),
                        t.strokeStyle <span class="p">=</span> <i class="o">this</i>.finishType <span class="p">?</span> <span class="y">&quot;#00CC66&quot;</span> : <span class="y">&quot;#FD8032&quot;</span>, t.<span class="b">stroke</span>(), t.lineWidth <span class="p">=</span> <span class="v">8</span>,
                        t.<span class="b">beginPath</span>(), t.<span class="b">drawImage</span>(<span class="y">&quot;../../static/images/dengtai.png&quot;</span>, n - <span class="v">8</span>, o - <span class="v">8</span>, <span class="v">16</span>, <span class="v">16</span>),
                        t.<span class="b">stroke</span>(), t.<span class="b">draw</span>();
                    },
                    <span class="g">operaSwitch</span>: <i class="b">function</i>(<i class="o">e</i>) {
                        <i class="b">console</i>.<span class="b">log</span>(e.detail.current), <i class="o">this</i>.switchIndex <span class="p">=</span> e.detail.current;
                    }
                }
            };
            r.default <span class="p">=</span> h;
        }).<span class="b">call</span>(<i class="o">this</i>, <span class="b">t</span>(<span class="y">&quot;543d&quot;</span>).default);
    },
    <span class="g">b5d9</span>: <i class="b">function</i>(e, r, t) {},
    <span class="g">de29</span>: <i class="b">function</i>(e, r, t) {
        t.<span class="b">d</span>(r, <span class="y">&quot;b&quot;</span>, <i class="b">function</i>() {
            <span class="p">return</span> n;
        }), t.<span class="b">d</span>(r, <span class="y">&quot;c&quot;</span>, <i class="b">function</i>() {
            <span class="p">return</span> o;
        }), t.<span class="b">d</span>(r, <span class="y">&quot;a&quot;</span>, <i class="b">function</i>() {
            <span class="p">return</span> a;
        });
        <i class="b">var</i> a <span class="p">=</span> {
            <span class="g">customerServices</span>: <i class="b">function</i>() {
                <span class="p">return</span> t.<span class="b">e</span>(<span class="y">&quot;components/customer-service/customer-service&quot;</span>).<span class="b">then</span>(t.<span class="b">bind</span>(<span class="v">null</span>, <span class="y">&quot;3e94&quot;</span>));
            },
            <span class="g">FreePark</span>: <i class="b">function</i>() {
                <span class="p">return</span> t.<span class="b">e</span>(<span class="y">&quot;components/FreePark/FreePark&quot;</span>).<span class="b">then</span>(t.<span class="b">bind</span>(<span class="v">null</span>, <span class="y">&quot;652a&quot;</span>));
            }
        }, n <span class="p">=</span> <i class="b">function</i>() {
            <i class="b">var</i> e <span class="p">=</span> <i class="o">this</i>, r <span class="p">=</span> (e.$createElement, e._self._c, e.isFromStartCountDown <span class="p">&amp;&amp;</span> <span class="v">1</span> <span class="p">==</span> e.orderInfo.orderState <span class="p">&amp;&amp;</span> e.countDownDri <span class="p">&gt;</span> <span class="v">0</span> <span class="p">?</span> e.countDownDri : <span class="v">0</span>);
            e.$mp.data <span class="p">=</span> <i class="b">Object</i>.<span class="b">assign</span>({}, {
                $root: {
                    g0: r,
                    g1: t
                }
            });
        }, o <span class="p">=</span> [];
    },
    <span class="g">f49d</span>: <i class="b">function</i>(e, r, t) {
        t.<span class="b">r</span>(r);
        <i class="b">var</i> n <span class="p">=</span> <span class="b">t</span>(<span class="y">&quot;de29&quot;</span>), o <span class="p">=</span> <span class="b">t</span>(<span class="y">&quot;1ae5&quot;</span>);
        <span class="p">for</span> (<i class="b">var</i> a <span class="p">in</span> o) <span class="y">&quot;default&quot;</span> <span class="p">!=</span><span class="p">=</span> a <span class="p">&amp;&amp;</span> <i class="b">function</i>(<i class="o">e</i>) {
            t.<span class="b">d</span>(r, e, <i class="b">function</i>() {
                <span class="p">return</span> o[e];
            });
        }(a);
        <span class="b">t</span>(<span class="y">&quot;3d3a&quot;</span>);
        <i class="b">var</i> i <span class="p">=</span> <span class="b">t</span>(<span class="y">&quot;f0c5&quot;</span>), s <span class="p">=</span> <i class="b">Object</i>(i.a)(o.default, n.b, n.c, <span class="p">!</span><span class="v">1</span>, <span class="v">null</span>, <span class="v">null</span>, <span class="v">null</span>, <span class="p">!</span><span class="v">1</span>, n.a, <span class="p">void</span> <span class="v">0</span>);
        r.default <span class="p">=</span> s.exports;
    }
}, [ [ <span class="y">&quot;57b6&quot;</span>, <span class="y">&quot;common/runtime&quot;</span>, <span class="y">&quot;common/vendor&quot;</span> ] ] ]);</pre></div>
<div class="mmsh"></div>
<div class="status">
<svg class="ic" style="left:24px;top:10px" width="32" height="24" viewBox="0 0 32 24"><rect x="1" y="1" width="30" height="22" rx="3" fill="none" stroke="#666871" stroke-width="2"/><path d="M1 16.5H31V20C31 21.7 29.7 23 28 23H4C2.3 23 1 21.7 1 20Z" fill="#666871"/></svg>
<span style="left:81px;letter-spacing:0">Line 1, Column 1</span>
<svg class="ic" style="left:2984px;top:10px" width="18" height="24" viewBox="0 0 18 24"><path d="M4 4V20M4 14C4 10 13 12 13 6" fill="none" stroke="#3a3c42" stroke-width="2.4"/><circle cx="4" cy="4" r="2.6" fill="#3a3c42"/><circle cx="4" cy="20" r="2.6" fill="#3a3c42"/><circle cx="13" cy="5" r="2.6" fill="#3a3c42"/></svg>
<span style="left:3012.5px">master</span>
<span style="left:3092px;top:10px;width:55.5px;height:23.5px;line-height:22.3px;font-size:18.6px;border:1.5px solid #7c808a;border-radius:5.5px;text-align:center;color:#666a74;letter-spacing:.2px">2146</span>
<span style="left:3215.5px">Spaces: 4</span>
<span style="left:3413px">JavaScript</span>
</div>
<svg class="ic" width="0" height="0" style="left:0;top:0"><defs><filter id="ol" x="-3%" y="-5%" width="106%" height="112%" color-interpolation-filters="sRGB"><feMorphology in="SourceAlpha" operator="dilate" radius="3 2.7" result="d"/><feComposite in="d" in2="SourceAlpha" operator="out" result="ring"/><feFlood flood-color="#fff" result="w"/><feComposite in="w" in2="ring" operator="in" result="wr"/><feFlood flood-color="#fff" flood-opacity=".1" result="w2"/><feComposite in="w2" in2="SourceAlpha" operator="in" result="inner"/><feMerge><feMergeNode in="wr"/><feMergeNode in="inner"/></feMerge></filter></defs></svg>
<pre class="art">     <u style="width:64px">__</u> <u style="width:128px">____</u>        <u style="width:96px">___</u> <u style="width:64px">__</u>
 <u style="width:96px">___</u>/ // / / <u style="width:64px">__</u> <u style="width:32px">_</u>  &lt;  // /<u style="width:32px">_</u> <u style="width:96px">___</u>
/ <u style="width:32px">_</u>  //<u style="width:32px">_</u>  <u style="width:32px">_</u>//  &#x27; \ / // <u style="width:64px">__</u>/(<u style="width:32px">_</u><s>-</s>&lt;
\<u style="width:32px">_</u>,<u style="width:32px">_</u>/  /<u style="width:32px">_</u>/ /<u style="width:32px">_</u>/<u style="width:32px">_</u>/<u style="width:32px">_</u>//<u style="width:32px">_</u>/ \<u style="width:64px">__</u>//<u style="width:96px">___</u>/</pre>
<div class="wm"><span style="letter-spacing:10.2px">initsec</span> blog.gm7.org</div>
</div>
</body></html>
